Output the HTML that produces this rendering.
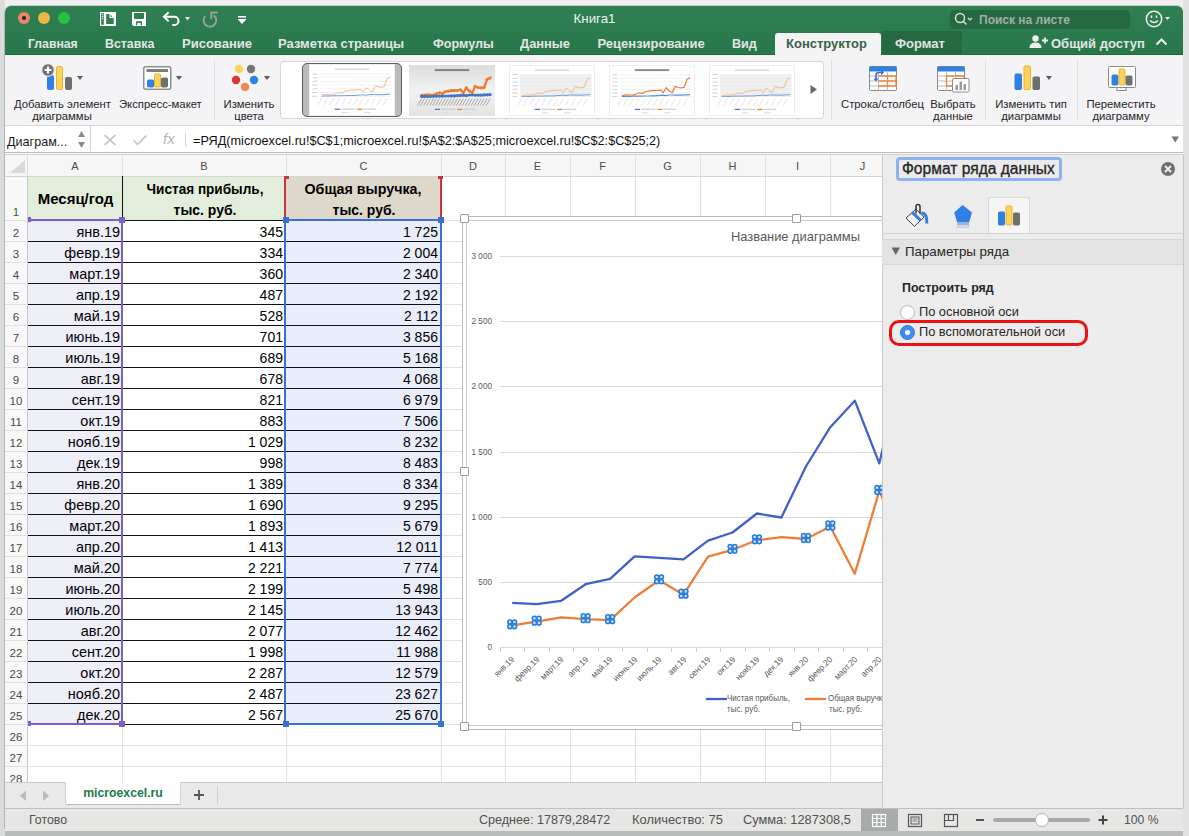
<!DOCTYPE html><html><head><meta charset="utf-8"><style>
html,body{margin:0;padding:0;width:1189px;height:836px;overflow:hidden;background:#efefef;font-family:"Liberation Sans",sans-serif;}
#win{position:absolute;left:0;top:0;width:1189px;height:836px;}
div{box-sizing:border-box;}
</style></head><body><div id="win">
<div style="position:absolute;left:0px;top:831px;width:1189px;height:5px;background:#b9bbbb;"></div>
<div style="position:absolute;left:1183px;top:0px;width:6px;height:836px;background:#e2e2e2;"></div>
<div style="position:absolute;left:0px;top:0px;width:5px;height:836px;background:#dadcdb;"></div>
<div style="position:absolute;left:4px;top:12px;width:1px;height:816px;background:#b2b5b3;"></div>
<div style="position:absolute;left:5px;top:5px;width:1178px;height:826px;background:#c9cbca;border-radius:6px 6px 5px 5px;"></div>
<div style="position:absolute;left:5px;top:6px;width:1178px;height:825px;background:#f3f3f3;border-radius:6px 6px 5px 5px;overflow:hidden;"></div>
<div style="position:absolute;left:5px;top:6px;width:1178px;height:49px;background:linear-gradient(#307f53 0px,#2f7e52 10px,#2b7a4e 30px,#29784c 48px);border-radius:6px 6px 0 0;"></div>
<div style="position:absolute;left:5px;top:54px;width:1178px;height:1px;background:#22693f;"></div>
<div style="position:absolute;left:18px;top:12px;width:12px;height:12px;background:#ec8664;border-radius:50%;"></div>
<div style="position:absolute;left:38px;top:12px;width:12px;height:12px;background:#e9b942;border-radius:50%;"></div>
<div style="position:absolute;left:58px;top:12px;width:12px;height:12px;background:#24c23f;border-radius:50%;"></div>
<div style="position:absolute;left:22px;top:16px;width:4px;height:4px;background:#222;border-radius:50%;"></div>
<svg style="position:absolute;left:99px;top:11px;" width="19" height="17" viewBox="0 0 19 17"><rect x="1" y="1" width="16" height="14" rx="0.8" fill="#fff"/><rect x="2.2" y="2" width="2.6" height="11.8" rx="0.5" fill="#2f7d51"/><circle cx="3.5" cy="3.4" r="0.6" fill="#fff"/><circle cx="3.5" cy="5.4" r="0.6" fill="#fff"/><circle cx="3.5" cy="7.4" r="0.6" fill="#fff"/><path d="M7.2 2.9 H10.5 V7 H14.7 V12.9 H7.2 Z" fill="#2f7d51"/><path d="M11.5 3.6 L13.6 5.7 H11.5 Z" fill="#2f7d51"/></svg>
<svg style="position:absolute;left:131px;top:11px;" width="16" height="16" viewBox="0 0 16 16"><path d="M1 1 H15 V15 H2.5 L1 13.5 Z" fill="#fff"/><path d="M3 2 H13 V7 Q13 8 12 8 H4 Q3 8 3 7 Z" fill="#2f7d51"/><path d="M5 14.2 V10.8 Q5 10.2 5.6 10.2 H10.4 Q11 10.2 11 10.8 V14.2 H9.7 V12 H6.3 V14.2 Z" fill="#2f7d51"/></svg>
<svg style="position:absolute;left:160px;top:10px;" width="34" height="18" viewBox="0 0 34 18"><path d="M3.5 6.8 H14.4 A4.1 4.1 0 0 1 14.4 15 H12.3" fill="none" stroke="#fff" stroke-width="2"/><path d="M8.6 2.3 L4 6.8 L8.6 11.4" fill="none" stroke="#fff" stroke-width="2"/><path d="M25 6.9 H30 L27.5 10.6 Z" fill="#eee"/></svg>
<svg style="position:absolute;left:200px;top:10px;" width="22" height="18" viewBox="0 0 22 18"><path d="M5.2 6.2 A6.3 6.3 0 1 0 13.6 5.2" fill="none" stroke="#9da39f" stroke-width="1.8"/><path d="M11.2 2.7 V9.2 M10.3 2.7 H17.7" fill="none" stroke="#9da39f" stroke-width="1.8"/></svg>
<svg style="position:absolute;left:236px;top:14px;" width="12" height="12" viewBox="0 0 12 12"><rect x="2" y="2" width="8" height="1.6" fill="#fff"/><path d="M1.5 5 H10.5 L6 10 Z" fill="#fff"/></svg>
<div style="position:absolute;left:594.5px;top:12px;font-size:13.3px;line-height:13.3px;color:#eef2ef;font-weight:400;white-space:nowrap;transform:translateX(-50%) scaleX(1.0);">Книга1</div>
<div style="position:absolute;left:950px;top:10px;width:180px;height:19px;background:#24693f;border-radius:5px;"></div>
<svg style="position:absolute;left:953px;top:11px;" width="22" height="16" viewBox="0 0 22 16"><circle cx="7" cy="7" r="4.5" fill="none" stroke="#ddd" stroke-width="1.5"/><line x1="10" y1="10" x2="13.5" y2="13.5" stroke="#ddd" stroke-width="1.6"/><path d="M15 7 L17 9 L19 7" fill="none" stroke="#ddd" stroke-width="1.2"/></svg>
<div style="position:absolute;left:979px;top:14px;font-size:12px;line-height:12px;color:#a2aea6;font-weight:700;white-space:nowrap;">Поиск на листе</div>
<svg style="position:absolute;left:1144px;top:9px;" width="30" height="20" viewBox="0 0 30 20"><circle cx="10" cy="10" r="7.7" fill="none" stroke="#f0f0f0" stroke-width="1.5"/><line x1="7.5" y1="6.5" x2="7.5" y2="9" stroke="#f0f0f0" stroke-width="1.5"/><line x1="12.5" y1="6.5" x2="12.5" y2="9" stroke="#f0f0f0" stroke-width="1.5"/><path d="M6 11.5 Q10 15.5 14 11.5" fill="none" stroke="#f0f0f0" stroke-width="1.5"/><path d="M21 8 H26 L23.5 11 Z" fill="#f0f0f0"/></svg>
<div style="position:absolute;left:27.5px;top:37px;font-size:13px;line-height:13px;color:#e3e5e3;font-weight:700;white-space:nowrap;transform:scaleX(0.94);transform-origin:left;">Главная</div>
<div style="position:absolute;left:105px;top:37px;font-size:13px;line-height:13px;color:#e3e5e3;font-weight:700;white-space:nowrap;transform:scaleX(0.95);transform-origin:left;">Вставка</div>
<div style="position:absolute;left:182px;top:37px;font-size:13px;line-height:13px;color:#e3e5e3;font-weight:700;white-space:nowrap;">Рисование</div>
<div style="position:absolute;left:278px;top:37px;font-size:13px;line-height:13px;color:#e3e5e3;font-weight:700;white-space:nowrap;">Разметка страницы</div>
<div style="position:absolute;left:432.5px;top:37px;font-size:13px;line-height:13px;color:#e3e5e3;font-weight:700;white-space:nowrap;transform:scaleX(0.97);transform-origin:left;">Формулы</div>
<div style="position:absolute;left:520px;top:37px;font-size:13px;line-height:13px;color:#e3e5e3;font-weight:700;white-space:nowrap;transform:scaleX(0.99);transform-origin:left;">Данные</div>
<div style="position:absolute;left:597.5px;top:37px;font-size:13px;line-height:13px;color:#e3e5e3;font-weight:700;white-space:nowrap;">Рецензирование</div>
<div style="position:absolute;left:732px;top:37px;font-size:13px;line-height:13px;color:#e3e5e3;font-weight:700;white-space:nowrap;transform:scaleX(0.97);transform-origin:left;">Вид</div>
<div style="position:absolute;left:775px;top:33px;width:106px;height:22px;background:#f3f3f3;border-radius:3px 3px 0 0;"></div>
<div style="position:absolute;left:786px;top:37px;font-size:13px;line-height:13px;color:#3b5e49;font-weight:700;white-space:nowrap;">Конструктор</div>
<div style="position:absolute;left:882px;top:31px;width:80px;height:24px;background:#24693f;border-radius:3px 3px 0 0;"></div>
<div style="position:absolute;left:895px;top:37px;font-size:13px;line-height:13px;color:#e3e5e3;font-weight:700;white-space:nowrap;">Формат</div>
<svg style="position:absolute;left:1029px;top:34px;" width="20" height="16" viewBox="0 0 20 16"><circle cx="6.5" cy="4.5" r="3.2" fill="#eee"/><path d="M0.5 14 Q0.5 8.5 6.5 8.5 Q12.5 8.5 12.5 14 Z" fill="#eee"/><path d="M13 6.5 H19 M16 3.5 V9.5" stroke="#eee" stroke-width="1.8"/></svg>
<div style="position:absolute;left:1051px;top:37px;font-size:13px;line-height:13px;color:#e3e5e3;font-weight:700;white-space:nowrap;">Общий доступ</div>
<svg style="position:absolute;left:1155px;top:37px;" width="13" height="9" viewBox="0 0 13 9"><path d="M1.5 7.5 L6.5 2.5 L11.5 7.5" fill="none" stroke="#eee" stroke-width="2"/></svg>
<div style="position:absolute;left:5px;top:55px;width:1178px;height:71px;background:#f4f3f6;"></div>
<div style="position:absolute;left:5px;top:125px;width:1178px;height:1px;background:#d6d6d6;"></div>
<svg style="position:absolute;left:40px;top:62px;" width="34" height="30" viewBox="0 0 34 30"><rect x="7.5" y="13.5" width="6" height="14" rx="1" fill="#2f80e2" stroke="#2f80e2" stroke-width="1"/><rect x="16.5" y="4.5" width="6" height="23" rx="1" fill="#fcd35b" stroke="#eeb52e" stroke-width="1"/><rect x="25.5" y="15.5" width="6" height="12" rx="1" fill="#6c716e" stroke="#6c716e" stroke-width="1"/><circle cx="8" cy="8" r="6.3" fill="#6f706f" stroke="#fff" stroke-width="1"/><path d="M8 4.5 V11.5 M4.5 8 H11.5" stroke="#fff" stroke-width="2.2"/></svg>
<svg style="position:absolute;left:77px;top:76px;" width="6" height="5" viewBox="0 0 6 5"><path d="M0 0 H6 L3 4 Z" fill="#5a5a5a"/></svg>
<div style="position:absolute;left:14px;top:99px;font-size:11.3px;line-height:11.3px;color:#262626;font-weight:400;white-space:nowrap;">Добавить элемент</div>
<div style="position:absolute;left:62px;top:111px;font-size:11.3px;line-height:11.3px;color:#262626;font-weight:400;white-space:nowrap;transform:translateX(-50%) scaleX(1.0);">диаграммы</div>
<svg style="position:absolute;left:143px;top:66px;" width="29" height="25" viewBox="0 0 29 25"><rect x="0.75" y="0.75" width="27" height="22.5" rx="2" fill="#fff" stroke="#8f8f8f" stroke-width="1.5"/><rect x="3.5" y="3" width="21.5" height="3" fill="#7b807d"/><rect x="4.5" y="14" width="6" height="7" rx="1" fill="#2f80e2" stroke="#2f80e2" stroke-width="1"/><rect x="11.5" y="8" width="6" height="13" rx="1" fill="#fcd35b" stroke="#eeb52e" stroke-width="1"/><rect x="18.5" y="12" width="6" height="9" rx="1" fill="#6c716e" stroke="#6c716e" stroke-width="1"/></svg>
<svg style="position:absolute;left:176px;top:76px;" width="6" height="5" viewBox="0 0 6 5"><path d="M0 0 H6 L3 4 Z" fill="#5a5a5a"/></svg>
<div style="position:absolute;left:119px;top:99px;font-size:11.3px;line-height:11.3px;color:#262626;font-weight:400;white-space:nowrap;">Экспресс-макет</div>
<div style="position:absolute;left:214px;top:60px;width:1px;height:60px;background:#dedede;"></div>
<svg style="position:absolute;left:230px;top:63px;" width="30" height="30" viewBox="0 0 30 30"><circle cx="9" cy="6" r="4.2" fill="#fcd35b"/><circle cx="21" cy="6" r="4.2" fill="#707571"/><circle cx="6" cy="17" r="4.2" fill="#d4382f"/><circle cx="24" cy="17" r="4.2" fill="#2f80e2"/><circle cx="15" cy="24" r="4.2" fill="#f18a4b"/></svg>
<svg style="position:absolute;left:264px;top:76px;" width="6" height="5" viewBox="0 0 6 5"><path d="M0 0 H6 L3 4 Z" fill="#5a5a5a"/></svg>
<div style="position:absolute;left:249px;top:99px;font-size:11.3px;line-height:11.3px;color:#262626;font-weight:400;white-space:nowrap;transform:translateX(-50%) scaleX(1.0);">Изменить</div>
<div style="position:absolute;left:249px;top:111px;font-size:11.3px;line-height:11.3px;color:#262626;font-weight:400;white-space:nowrap;transform:translateX(-50%) scaleX(1.0);">цвета</div>
<div style="position:absolute;left:280px;top:61px;width:544px;height:58px;background:#fff;border:1px solid #d5d5d5;border-radius:4px;"></div>
<svg style="position:absolute;left:810px;top:85px;" width="8" height="10" viewBox="0 0 8 10"><path d="M0.5 0 L7 4.5 L0.5 9 Z" fill="#6a6a6a"/></svg>
<div style="position:absolute;left:831px;top:60px;width:1px;height:60px;background:#dedede;"></div>
<div style="position:absolute;left:985px;top:60px;width:1px;height:60px;background:#dedede;"></div>
<div style="position:absolute;left:1077px;top:60px;width:1px;height:60px;background:#dedede;"></div>
<svg style="position:absolute;left:869px;top:66px;" width="29" height="27" viewBox="0 0 29 27"><rect x="0.5" y="0.5" width="27" height="24" rx="1" fill="#fff" stroke="#8a8a8a" stroke-width="1"/><rect x="0.5" y="0.5" width="27" height="5" fill="#2f80e2"/><path d="M9.5 5 V24.5 M18.5 5 V24.5 M1 10 H27 M1 15 H27 M1 20 H27" stroke="#bdbdbd" stroke-width="1"/><path d="M9.5 10 H27 V20 H9.5 M18.5 10 V20 M9.5 15 H27" fill="none" stroke="#f0873d" stroke-width="1.4"/><path d="M7 14 V9 Q7 6.5 10 6.5 H13" fill="none" stroke="#2f6fd8" stroke-width="1.6"/><path d="M12 4.5 L14.5 6.5 L12 8.5" fill="#2f6fd8" stroke="#2f6fd8"/><path d="M4.5 12.5 L7 15.5 L9.5 12.5 Z" fill="#2f6fd8"/></svg>
<div style="position:absolute;left:841px;top:99px;font-size:11.3px;line-height:11.3px;color:#262626;font-weight:400;white-space:nowrap;">Строка/столбец</div>
<svg style="position:absolute;left:937px;top:66px;" width="29" height="27" viewBox="0 0 29 27"><rect x="0.5" y="0.5" width="27" height="24" rx="1" fill="#fff" stroke="#8a8a8a" stroke-width="1"/><rect x="0.5" y="0.5" width="27" height="5" fill="#2f80e2"/><path d="M9.5 5 V24.5 M18.5 5 V24.5 M1 10 H27 M1 15 H27 M1 20 H27" stroke="#bdbdbd" stroke-width="1"/><path d="M9.5 10 H27 V20 H9.5 Z" fill="none" stroke="#f0873d" stroke-width="1.4"/></svg>
<svg style="position:absolute;left:952px;top:78px;" width="18" height="15" viewBox="0 0 18 15"><rect x="0.5" y="0.5" width="16.5" height="13.5" rx="1.5" fill="#fff" stroke="#8a8a8a"/><rect x="3.5" y="7" width="2.5" height="5" fill="#9a9a9a"/><rect x="7.5" y="3.5" width="2.5" height="8.5" fill="#9a9a9a"/><rect x="11.5" y="6" width="2.5" height="6" fill="#9a9a9a"/></svg>
<div style="position:absolute;left:953px;top:99px;font-size:11.3px;line-height:11.3px;color:#262626;font-weight:400;white-space:nowrap;transform:translateX(-50%) scaleX(1.0);">Выбрать</div>
<div style="position:absolute;left:953px;top:111px;font-size:11.3px;line-height:11.3px;color:#262626;font-weight:400;white-space:nowrap;transform:translateX(-50%) scaleX(1.0);">данные</div>
<svg style="position:absolute;left:1014px;top:65px;" width="28" height="26" viewBox="0 0 28 26"><rect x="1" y="9" width="6.5" height="15.5" rx="1" fill="#2f80e2" stroke="#2f80e2" stroke-width="1"/><rect x="10" y="1" width="6.5" height="23.5" rx="1" fill="#fcd35b" stroke="#eeb52e" stroke-width="1"/><rect x="19" y="12" width="6.5" height="12.5" rx="1" fill="#6c716e" stroke="#6c716e" stroke-width="1"/></svg>
<svg style="position:absolute;left:1046px;top:76px;" width="6" height="5" viewBox="0 0 6 5"><path d="M0 0 H6 L3 4 Z" fill="#5a5a5a"/></svg>
<div style="position:absolute;left:1031px;top:99px;font-size:11.3px;line-height:11.3px;color:#262626;font-weight:400;white-space:nowrap;transform:translateX(-50%) scaleX(1.0);">Изменить тип</div>
<div style="position:absolute;left:1031px;top:111px;font-size:11.3px;line-height:11.3px;color:#262626;font-weight:400;white-space:nowrap;transform:translateX(-50%) scaleX(1.0);">диаграммы</div>
<svg style="position:absolute;left:1107px;top:65px;" width="30" height="27" viewBox="0 0 30 27"><rect x="1.5" y="1.5" width="27" height="21" rx="1" fill="#fff" stroke="#8a8a8a" stroke-width="1"/><rect x="10" y="22.5" width="9" height="3" fill="#fff" stroke="#8a8a8a" stroke-width="1"/><rect x="5" y="10" width="6" height="10" rx="1" fill="#2f80e2" stroke="#2f80e2" stroke-width="1"/><rect x="12" y="4" width="6" height="16" rx="1" fill="#fcd35b" stroke="#eeb52e" stroke-width="1"/><rect x="19" y="11" width="6" height="9" rx="1" fill="#6c716e" stroke="#6c716e" stroke-width="1"/></svg>
<div style="position:absolute;left:1121px;top:99px;font-size:11.3px;line-height:11.3px;color:#262626;font-weight:400;white-space:nowrap;transform:translateX(-50%) scaleX(1.0);">Переместить</div>
<div style="position:absolute;left:1121px;top:111px;font-size:11.3px;line-height:11.3px;color:#262626;font-weight:400;white-space:nowrap;transform:translateX(-50%) scaleX(1.0);">диаграмму</div>
<div style="position:absolute;left:302px;top:63px;width:100px;height:54px;background:#b9bab9;border:1.5px solid #55655b;border-radius:5px;"></div>
<svg style="position:absolute;left:309px;top:64px;" width="86" height="52" viewBox="0 0 86 52"><rect x="0.5" y="0.5" width="85" height="51" fill="#fff" stroke="#eeeeee"/><rect x="25.8" y="4.16" width="34.4" height="2" fill="#999" opacity="0.3"/><line x1="11.18" y1="9.9" x2="82.56" y2="9.9" stroke="#e6e6e6" stroke-width="0.6"/><rect x="3.44" y="9.4" width="5.16" height="1" fill="#d2d2d2"/><line x1="11.18" y1="13.6" x2="82.56" y2="13.6" stroke="#e6e6e6" stroke-width="0.6"/><rect x="3.44" y="13.1" width="5.16" height="1" fill="#d2d2d2"/><line x1="11.18" y1="17.3" x2="82.56" y2="17.3" stroke="#e6e6e6" stroke-width="0.6"/><rect x="3.44" y="16.8" width="5.16" height="1" fill="#d2d2d2"/><line x1="11.18" y1="21.1" x2="82.56" y2="21.1" stroke="#e6e6e6" stroke-width="0.6"/><rect x="3.44" y="20.6" width="5.16" height="1" fill="#d2d2d2"/><line x1="11.18" y1="24.8" x2="82.56" y2="24.8" stroke="#e6e6e6" stroke-width="0.6"/><rect x="3.44" y="24.3" width="5.16" height="1" fill="#d2d2d2"/><line x1="11.18" y1="28.5" x2="82.56" y2="28.5" stroke="#e6e6e6" stroke-width="0.6"/><rect x="3.44" y="28.0" width="5.16" height="1" fill="#d2d2d2"/><line x1="11.18" y1="32.2" x2="82.56" y2="32.2" stroke="#e6e6e6" stroke-width="0.6"/><rect x="3.44" y="31.7" width="5.16" height="1" fill="#d2d2d2"/><polyline points="12.7,32.0 15.6,32.0 18.6,32.0 21.6,31.9 24.6,31.8 27.5,31.7 30.5,31.7 33.5,31.7 36.5,31.6 39.4,31.6 42.4,31.5 45.4,31.5 48.4,31.2 51.3,31.0 54.3,30.8 57.3,31.2 60.3,30.6 63.2,30.6 66.2,30.6 69.2,30.7 72.2,30.8 75.1,30.5 78.1,30.4 81.1,30.3" fill="none" stroke="#5b8fdc" stroke-width="0.9"/><polyline points="12.7,31.0 15.6,30.7 18.6,30.5 21.6,30.6 24.6,30.7 27.5,29.4 30.5,28.4 33.5,29.2 36.5,27.0 39.4,26.6 42.4,26.1 45.4,25.9 48.4,26.0 51.3,25.3 54.3,28.0 57.3,23.3 60.3,26.4 63.2,28.1 66.2,21.8 69.2,23.0 72.2,23.3 75.1,22.9 78.1,14.6 81.1,13.1" fill="none" stroke="#f4b183" stroke-width="0.9"/><line x1="12.7" y1="34.2" x2="8.7" y2="41.2" stroke="#d0d0d0" stroke-width="0.8" opacity="0.7"/><line x1="18.6" y1="34.2" x2="14.6" y2="41.2" stroke="#d0d0d0" stroke-width="0.8" opacity="0.7"/><line x1="24.6" y1="34.2" x2="20.6" y2="41.2" stroke="#d0d0d0" stroke-width="0.8" opacity="0.7"/><line x1="30.5" y1="34.2" x2="26.5" y2="41.2" stroke="#d0d0d0" stroke-width="0.8" opacity="0.7"/><line x1="36.5" y1="34.2" x2="32.5" y2="41.2" stroke="#d0d0d0" stroke-width="0.8" opacity="0.7"/><line x1="42.4" y1="34.2" x2="38.4" y2="41.2" stroke="#d0d0d0" stroke-width="0.8" opacity="0.7"/><line x1="48.4" y1="34.2" x2="44.4" y2="41.2" stroke="#d0d0d0" stroke-width="0.8" opacity="0.7"/><line x1="54.3" y1="34.2" x2="50.3" y2="41.2" stroke="#d0d0d0" stroke-width="0.8" opacity="0.7"/><line x1="60.3" y1="34.2" x2="56.3" y2="41.2" stroke="#d0d0d0" stroke-width="0.8" opacity="0.7"/><line x1="66.2" y1="34.2" x2="62.2" y2="41.2" stroke="#d0d0d0" stroke-width="0.8" opacity="0.7"/><line x1="72.2" y1="34.2" x2="68.2" y2="41.2" stroke="#d0d0d0" stroke-width="0.8" opacity="0.7"/><line x1="78.1" y1="34.2" x2="74.1" y2="41.2" stroke="#d0d0d0" stroke-width="0.8" opacity="0.7"/><line x1="25.8" y1="45.24" x2="30.959999999999997" y2="45.24" stroke="#4472c4" stroke-width="1.2"/><rect x="31.82" y="44.54" width="14.620000000000001" height="1.2" fill="#cfcfcf"/><line x1="48.160000000000004" y1="45.24" x2="53.32" y2="45.24" stroke="#ed7d31" stroke-width="1.2"/><rect x="54.18" y="44.54" width="12.9" height="1.2" fill="#cfcfcf"/><rect x="32.68" y="48.24" width="6.88" height="1" fill="#d8d8d8"/><rect x="55.04" y="48.24" width="6.88" height="1" fill="#d8d8d8"/></svg>
<svg style="position:absolute;left:409px;top:65px;" width="86" height="51" viewBox="0 0 86 51"><defs><linearGradient id="tg" x1="0" y1="0" x2="0" y2="1"><stop offset="0" stop-color="#dcdcdc"/><stop offset="0.5" stop-color="#f2f2f2"/><stop offset="1" stop-color="#e4e4e4"/></linearGradient></defs><rect x="0" y="0" width="86" height="51" fill="url(#tg)"/><rect x="25.8" y="4.08" width="34.4" height="2" fill="#444" opacity="0.6"/><polyline points="12.7,31.4 15.6,31.4 18.6,31.4 21.6,31.3 24.6,31.2 27.5,31.1 30.5,31.1 33.5,31.1 36.5,31.0 39.4,31.0 42.4,30.9 45.4,30.9 48.4,30.6 51.3,30.4 54.3,30.2 57.3,30.6 60.3,30.0 63.2,30.0 66.2,30.1 69.2,30.1 72.2,30.2 75.1,29.9 78.1,29.8 81.1,29.7" fill="none" stroke="#5b8fdc" stroke-width="2.2"/><polyline points="12.7,30.4 15.6,30.2 18.6,29.9 21.6,30.0 24.6,30.1 27.5,28.8 30.5,27.8 33.5,28.6 36.5,26.5 39.4,26.1 42.4,25.6 45.4,25.4 48.4,25.5 51.3,24.8 54.3,27.5 57.3,22.8 60.3,25.9 63.2,27.6 66.2,21.4 69.2,22.5 72.2,22.9 75.1,22.4 78.1,14.3 81.1,12.9" fill="none" stroke="#ed7d31" stroke-width="2.2"/><circle cx="12.7" cy="30.4" r="1.6" fill="#ed7d31"/><circle cx="12.7" cy="31.4" r="1.6" fill="#4472c4"/><circle cx="15.6" cy="30.2" r="1.6" fill="#ed7d31"/><circle cx="15.6" cy="31.4" r="1.6" fill="#4472c4"/><circle cx="18.6" cy="29.9" r="1.6" fill="#ed7d31"/><circle cx="18.6" cy="31.4" r="1.6" fill="#4472c4"/><circle cx="21.6" cy="30.0" r="1.6" fill="#ed7d31"/><circle cx="21.6" cy="31.3" r="1.6" fill="#4472c4"/><circle cx="24.6" cy="30.1" r="1.6" fill="#ed7d31"/><circle cx="24.6" cy="31.2" r="1.6" fill="#4472c4"/><circle cx="27.5" cy="28.8" r="1.6" fill="#ed7d31"/><circle cx="27.5" cy="31.1" r="1.6" fill="#4472c4"/><circle cx="30.5" cy="27.8" r="1.6" fill="#ed7d31"/><circle cx="30.5" cy="31.1" r="1.6" fill="#4472c4"/><circle cx="33.5" cy="28.6" r="1.6" fill="#ed7d31"/><circle cx="33.5" cy="31.1" r="1.6" fill="#4472c4"/><circle cx="36.5" cy="26.5" r="1.6" fill="#ed7d31"/><circle cx="36.5" cy="31.0" r="1.6" fill="#4472c4"/><circle cx="39.4" cy="26.1" r="1.6" fill="#ed7d31"/><circle cx="39.4" cy="31.0" r="1.6" fill="#4472c4"/><circle cx="42.4" cy="25.6" r="1.6" fill="#ed7d31"/><circle cx="42.4" cy="30.9" r="1.6" fill="#4472c4"/><circle cx="45.4" cy="25.4" r="1.6" fill="#ed7d31"/><circle cx="45.4" cy="30.9" r="1.6" fill="#4472c4"/><circle cx="48.4" cy="25.5" r="1.6" fill="#ed7d31"/><circle cx="48.4" cy="30.6" r="1.6" fill="#4472c4"/><circle cx="51.3" cy="24.8" r="1.6" fill="#ed7d31"/><circle cx="51.3" cy="30.4" r="1.6" fill="#4472c4"/><circle cx="54.3" cy="27.5" r="1.6" fill="#ed7d31"/><circle cx="54.3" cy="30.2" r="1.6" fill="#4472c4"/><circle cx="57.3" cy="22.8" r="1.6" fill="#ed7d31"/><circle cx="57.3" cy="30.6" r="1.6" fill="#4472c4"/><circle cx="60.3" cy="25.9" r="1.6" fill="#ed7d31"/><circle cx="60.3" cy="30.0" r="1.6" fill="#4472c4"/><circle cx="63.2" cy="27.6" r="1.6" fill="#ed7d31"/><circle cx="63.2" cy="30.0" r="1.6" fill="#4472c4"/><circle cx="66.2" cy="21.4" r="1.6" fill="#ed7d31"/><circle cx="66.2" cy="30.1" r="1.6" fill="#4472c4"/><circle cx="69.2" cy="22.5" r="1.6" fill="#ed7d31"/><circle cx="69.2" cy="30.1" r="1.6" fill="#4472c4"/><circle cx="72.2" cy="22.9" r="1.6" fill="#ed7d31"/><circle cx="72.2" cy="30.2" r="1.6" fill="#4472c4"/><circle cx="75.1" cy="22.4" r="1.6" fill="#ed7d31"/><circle cx="75.1" cy="29.9" r="1.6" fill="#4472c4"/><circle cx="78.1" cy="14.3" r="1.6" fill="#ed7d31"/><circle cx="78.1" cy="29.8" r="1.6" fill="#4472c4"/><circle cx="81.1" cy="12.9" r="1.6" fill="#ed7d31"/><circle cx="81.1" cy="29.7" r="1.6" fill="#4472c4"/><line x1="12.7" y1="33.6" x2="8.7" y2="40.6" stroke="#777" stroke-width="0.8" opacity="0.7"/><line x1="15.6" y1="33.6" x2="11.6" y2="40.6" stroke="#777" stroke-width="0.8" opacity="0.7"/><line x1="18.6" y1="33.6" x2="14.6" y2="40.6" stroke="#777" stroke-width="0.8" opacity="0.7"/><line x1="21.6" y1="33.6" x2="17.6" y2="40.6" stroke="#777" stroke-width="0.8" opacity="0.7"/><line x1="24.6" y1="33.6" x2="20.6" y2="40.6" stroke="#777" stroke-width="0.8" opacity="0.7"/><line x1="27.5" y1="33.6" x2="23.5" y2="40.6" stroke="#777" stroke-width="0.8" opacity="0.7"/><line x1="30.5" y1="33.6" x2="26.5" y2="40.6" stroke="#777" stroke-width="0.8" opacity="0.7"/><line x1="33.5" y1="33.6" x2="29.5" y2="40.6" stroke="#777" stroke-width="0.8" opacity="0.7"/><line x1="36.5" y1="33.6" x2="32.5" y2="40.6" stroke="#777" stroke-width="0.8" opacity="0.7"/><line x1="39.4" y1="33.6" x2="35.4" y2="40.6" stroke="#777" stroke-width="0.8" opacity="0.7"/><line x1="42.4" y1="33.6" x2="38.4" y2="40.6" stroke="#777" stroke-width="0.8" opacity="0.7"/><line x1="45.4" y1="33.6" x2="41.4" y2="40.6" stroke="#777" stroke-width="0.8" opacity="0.7"/><line x1="48.4" y1="33.6" x2="44.4" y2="40.6" stroke="#777" stroke-width="0.8" opacity="0.7"/><line x1="51.3" y1="33.6" x2="47.3" y2="40.6" stroke="#777" stroke-width="0.8" opacity="0.7"/><line x1="54.3" y1="33.6" x2="50.3" y2="40.6" stroke="#777" stroke-width="0.8" opacity="0.7"/><line x1="57.3" y1="33.6" x2="53.3" y2="40.6" stroke="#777" stroke-width="0.8" opacity="0.7"/><line x1="60.3" y1="33.6" x2="56.3" y2="40.6" stroke="#777" stroke-width="0.8" opacity="0.7"/><line x1="63.2" y1="33.6" x2="59.2" y2="40.6" stroke="#777" stroke-width="0.8" opacity="0.7"/><line x1="66.2" y1="33.6" x2="62.2" y2="40.6" stroke="#777" stroke-width="0.8" opacity="0.7"/><line x1="69.2" y1="33.6" x2="65.2" y2="40.6" stroke="#777" stroke-width="0.8" opacity="0.7"/><line x1="72.2" y1="33.6" x2="68.2" y2="40.6" stroke="#777" stroke-width="0.8" opacity="0.7"/><line x1="75.1" y1="33.6" x2="71.1" y2="40.6" stroke="#777" stroke-width="0.8" opacity="0.7"/><line x1="78.1" y1="33.6" x2="74.1" y2="40.6" stroke="#777" stroke-width="0.8" opacity="0.7"/><line x1="81.1" y1="33.6" x2="77.1" y2="40.6" stroke="#777" stroke-width="0.8" opacity="0.7"/><line x1="25.8" y1="44.37" x2="30.959999999999997" y2="44.37" stroke="#4472c4" stroke-width="1.2"/><rect x="31.82" y="43.669999999999995" width="14.620000000000001" height="1.2" fill="#cfcfcf"/><line x1="48.160000000000004" y1="44.37" x2="53.32" y2="44.37" stroke="#ed7d31" stroke-width="1.2"/><rect x="54.18" y="43.669999999999995" width="12.9" height="1.2" fill="#cfcfcf"/><rect x="32.68" y="47.37" width="6.88" height="1" fill="#d8d8d8"/><rect x="55.04" y="47.37" width="6.88" height="1" fill="#d8d8d8"/></svg>
<svg style="position:absolute;left:509px;top:65px;" width="86" height="51" viewBox="0 0 86 51"><rect x="0.5" y="0.5" width="85" height="50" fill="#fff" stroke="#eeeeee"/><rect x="25.8" y="4.08" width="34.4" height="2" fill="#999" opacity="0.3"/><rect x="11.18" y="9.69" width="71.38" height="21.93" fill="#f0f0f0"/><line x1="11.18" y1="9.7" x2="82.56" y2="9.7" stroke="#e6e6e6" stroke-width="0.6"/><rect x="3.44" y="9.2" width="5.16" height="1" fill="#d2d2d2"/><line x1="11.18" y1="13.3" x2="82.56" y2="13.3" stroke="#e6e6e6" stroke-width="0.6"/><rect x="3.44" y="12.8" width="5.16" height="1" fill="#d2d2d2"/><line x1="11.18" y1="17.0" x2="82.56" y2="17.0" stroke="#e6e6e6" stroke-width="0.6"/><rect x="3.44" y="16.5" width="5.16" height="1" fill="#d2d2d2"/><line x1="11.18" y1="20.7" x2="82.56" y2="20.7" stroke="#e6e6e6" stroke-width="0.6"/><rect x="3.44" y="20.2" width="5.16" height="1" fill="#d2d2d2"/><line x1="11.18" y1="24.3" x2="82.56" y2="24.3" stroke="#e6e6e6" stroke-width="0.6"/><rect x="3.44" y="23.8" width="5.16" height="1" fill="#d2d2d2"/><line x1="11.18" y1="28.0" x2="82.56" y2="28.0" stroke="#e6e6e6" stroke-width="0.6"/><rect x="3.44" y="27.5" width="5.16" height="1" fill="#d2d2d2"/><line x1="11.18" y1="31.6" x2="82.56" y2="31.6" stroke="#e6e6e6" stroke-width="0.6"/><rect x="3.44" y="31.1" width="5.16" height="1" fill="#d2d2d2"/><polyline points="12.7,31.4 15.6,31.4 18.6,31.4 21.6,31.3 24.6,31.2 27.5,31.1 30.5,31.1 33.5,31.1 36.5,31.0 39.4,31.0 42.4,30.9 45.4,30.9 48.4,30.6 51.3,30.4 54.3,30.2 57.3,30.6 60.3,30.0 63.2,30.0 66.2,30.1 69.2,30.1 72.2,30.2 75.1,29.9 78.1,29.8 81.1,29.7" fill="none" stroke="#5b8fdc" stroke-width="0.9"/><polyline points="12.7,30.4 15.6,30.2 18.6,29.9 21.6,30.0 24.6,30.1 27.5,28.8 30.5,27.8 33.5,28.6 36.5,26.5 39.4,26.1 42.4,25.6 45.4,25.4 48.4,25.5 51.3,24.8 54.3,27.5 57.3,22.8 60.3,25.9 63.2,27.6 66.2,21.4 69.2,22.5 72.2,22.9 75.1,22.4 78.1,14.3 81.1,12.9" fill="none" stroke="#f4b183" stroke-width="0.9"/><line x1="12.7" y1="33.6" x2="8.7" y2="40.6" stroke="#d0d0d0" stroke-width="0.8" opacity="0.7"/><line x1="18.6" y1="33.6" x2="14.6" y2="40.6" stroke="#d0d0d0" stroke-width="0.8" opacity="0.7"/><line x1="24.6" y1="33.6" x2="20.6" y2="40.6" stroke="#d0d0d0" stroke-width="0.8" opacity="0.7"/><line x1="30.5" y1="33.6" x2="26.5" y2="40.6" stroke="#d0d0d0" stroke-width="0.8" opacity="0.7"/><line x1="36.5" y1="33.6" x2="32.5" y2="40.6" stroke="#d0d0d0" stroke-width="0.8" opacity="0.7"/><line x1="42.4" y1="33.6" x2="38.4" y2="40.6" stroke="#d0d0d0" stroke-width="0.8" opacity="0.7"/><line x1="48.4" y1="33.6" x2="44.4" y2="40.6" stroke="#d0d0d0" stroke-width="0.8" opacity="0.7"/><line x1="54.3" y1="33.6" x2="50.3" y2="40.6" stroke="#d0d0d0" stroke-width="0.8" opacity="0.7"/><line x1="60.3" y1="33.6" x2="56.3" y2="40.6" stroke="#d0d0d0" stroke-width="0.8" opacity="0.7"/><line x1="66.2" y1="33.6" x2="62.2" y2="40.6" stroke="#d0d0d0" stroke-width="0.8" opacity="0.7"/><line x1="72.2" y1="33.6" x2="68.2" y2="40.6" stroke="#d0d0d0" stroke-width="0.8" opacity="0.7"/><line x1="78.1" y1="33.6" x2="74.1" y2="40.6" stroke="#d0d0d0" stroke-width="0.8" opacity="0.7"/><line x1="25.8" y1="44.37" x2="30.959999999999997" y2="44.37" stroke="#4472c4" stroke-width="1.2"/><rect x="31.82" y="43.669999999999995" width="14.620000000000001" height="1.2" fill="#cfcfcf"/><line x1="48.160000000000004" y1="44.37" x2="53.32" y2="44.37" stroke="#ed7d31" stroke-width="1.2"/><rect x="54.18" y="43.669999999999995" width="12.9" height="1.2" fill="#cfcfcf"/><rect x="32.68" y="47.37" width="6.88" height="1" fill="#d8d8d8"/><rect x="55.04" y="47.37" width="6.88" height="1" fill="#d8d8d8"/></svg>
<svg style="position:absolute;left:609px;top:65px;" width="86" height="51" viewBox="0 0 86 51"><rect x="0.5" y="0.5" width="85" height="50" fill="#fff" stroke="#eeeeee"/><rect x="25.8" y="4.08" width="34.4" height="2" fill="#444" opacity="0.6"/><line x1="11.18" y1="9.7" x2="82.56" y2="9.7" stroke="#e6e6e6" stroke-width="0.6"/><rect x="3.44" y="9.2" width="5.16" height="1" fill="#d2d2d2"/><line x1="11.18" y1="13.3" x2="82.56" y2="13.3" stroke="#e6e6e6" stroke-width="0.6"/><rect x="3.44" y="12.8" width="5.16" height="1" fill="#d2d2d2"/><line x1="11.18" y1="17.0" x2="82.56" y2="17.0" stroke="#e6e6e6" stroke-width="0.6"/><rect x="3.44" y="16.5" width="5.16" height="1" fill="#d2d2d2"/><line x1="11.18" y1="20.7" x2="82.56" y2="20.7" stroke="#e6e6e6" stroke-width="0.6"/><rect x="3.44" y="20.2" width="5.16" height="1" fill="#d2d2d2"/><line x1="11.18" y1="24.3" x2="82.56" y2="24.3" stroke="#e6e6e6" stroke-width="0.6"/><rect x="3.44" y="23.8" width="5.16" height="1" fill="#d2d2d2"/><line x1="11.18" y1="28.0" x2="82.56" y2="28.0" stroke="#e6e6e6" stroke-width="0.6"/><rect x="3.44" y="27.5" width="5.16" height="1" fill="#d2d2d2"/><line x1="11.18" y1="31.6" x2="82.56" y2="31.6" stroke="#e6e6e6" stroke-width="0.6"/><rect x="3.44" y="31.1" width="5.16" height="1" fill="#d2d2d2"/><polyline points="12.7,31.4 15.6,31.4 18.6,31.4 21.6,31.3 24.6,31.2 27.5,31.1 30.5,31.1 33.5,31.1 36.5,31.0 39.4,31.0 42.4,30.9 45.4,30.9 48.4,30.6 51.3,30.4 54.3,30.2 57.3,30.6 60.3,30.0 63.2,30.0 66.2,30.1 69.2,30.1 72.2,30.2 75.1,29.9 78.1,29.8 81.1,29.7" fill="none" stroke="#5b8fdc" stroke-width="1.2"/><polyline points="12.7,30.4 15.6,30.2 18.6,29.9 21.6,30.0 24.6,30.1 27.5,28.8 30.5,27.8 33.5,28.6 36.5,26.5 39.4,26.1 42.4,25.6 45.4,25.4 48.4,25.5 51.3,24.8 54.3,27.5 57.3,22.8 60.3,25.9 63.2,27.6 66.2,21.4 69.2,22.5 72.2,22.9 75.1,22.4 78.1,14.3 81.1,12.9" fill="none" stroke="#ed7d31" stroke-width="1.2"/><line x1="12.7" y1="33.6" x2="8.7" y2="40.6" stroke="#d0d0d0" stroke-width="0.8" opacity="0.7"/><line x1="18.6" y1="33.6" x2="14.6" y2="40.6" stroke="#d0d0d0" stroke-width="0.8" opacity="0.7"/><line x1="24.6" y1="33.6" x2="20.6" y2="40.6" stroke="#d0d0d0" stroke-width="0.8" opacity="0.7"/><line x1="30.5" y1="33.6" x2="26.5" y2="40.6" stroke="#d0d0d0" stroke-width="0.8" opacity="0.7"/><line x1="36.5" y1="33.6" x2="32.5" y2="40.6" stroke="#d0d0d0" stroke-width="0.8" opacity="0.7"/><line x1="42.4" y1="33.6" x2="38.4" y2="40.6" stroke="#d0d0d0" stroke-width="0.8" opacity="0.7"/><line x1="48.4" y1="33.6" x2="44.4" y2="40.6" stroke="#d0d0d0" stroke-width="0.8" opacity="0.7"/><line x1="54.3" y1="33.6" x2="50.3" y2="40.6" stroke="#d0d0d0" stroke-width="0.8" opacity="0.7"/><line x1="60.3" y1="33.6" x2="56.3" y2="40.6" stroke="#d0d0d0" stroke-width="0.8" opacity="0.7"/><line x1="66.2" y1="33.6" x2="62.2" y2="40.6" stroke="#d0d0d0" stroke-width="0.8" opacity="0.7"/><line x1="72.2" y1="33.6" x2="68.2" y2="40.6" stroke="#d0d0d0" stroke-width="0.8" opacity="0.7"/><line x1="78.1" y1="33.6" x2="74.1" y2="40.6" stroke="#d0d0d0" stroke-width="0.8" opacity="0.7"/><line x1="25.8" y1="44.37" x2="30.959999999999997" y2="44.37" stroke="#4472c4" stroke-width="1.2"/><rect x="31.82" y="43.669999999999995" width="14.620000000000001" height="1.2" fill="#cfcfcf"/><line x1="48.160000000000004" y1="44.37" x2="53.32" y2="44.37" stroke="#ed7d31" stroke-width="1.2"/><rect x="54.18" y="43.669999999999995" width="12.9" height="1.2" fill="#cfcfcf"/><rect x="32.68" y="47.37" width="6.88" height="1" fill="#d8d8d8"/><rect x="55.04" y="47.37" width="6.88" height="1" fill="#d8d8d8"/></svg>
<svg style="position:absolute;left:709px;top:65px;" width="86" height="51" viewBox="0 0 86 51"><rect x="0.5" y="0.5" width="85" height="50" fill="#fff" stroke="#eeeeee"/><rect x="25.8" y="4.08" width="34.4" height="2" fill="#999" opacity="0.3"/><rect x="11.18" y="9.69" width="71.38" height="21.93" fill="#f0f0f0"/><line x1="11.18" y1="9.7" x2="82.56" y2="9.7" stroke="#e6e6e6" stroke-width="0.6"/><rect x="3.44" y="9.2" width="5.16" height="1" fill="#d2d2d2"/><line x1="11.18" y1="13.3" x2="82.56" y2="13.3" stroke="#e6e6e6" stroke-width="0.6"/><rect x="3.44" y="12.8" width="5.16" height="1" fill="#d2d2d2"/><line x1="11.18" y1="17.0" x2="82.56" y2="17.0" stroke="#e6e6e6" stroke-width="0.6"/><rect x="3.44" y="16.5" width="5.16" height="1" fill="#d2d2d2"/><line x1="11.18" y1="20.7" x2="82.56" y2="20.7" stroke="#e6e6e6" stroke-width="0.6"/><rect x="3.44" y="20.2" width="5.16" height="1" fill="#d2d2d2"/><line x1="11.18" y1="24.3" x2="82.56" y2="24.3" stroke="#e6e6e6" stroke-width="0.6"/><rect x="3.44" y="23.8" width="5.16" height="1" fill="#d2d2d2"/><line x1="11.18" y1="28.0" x2="82.56" y2="28.0" stroke="#e6e6e6" stroke-width="0.6"/><rect x="3.44" y="27.5" width="5.16" height="1" fill="#d2d2d2"/><line x1="11.18" y1="31.6" x2="82.56" y2="31.6" stroke="#e6e6e6" stroke-width="0.6"/><rect x="3.44" y="31.1" width="5.16" height="1" fill="#d2d2d2"/><polyline points="12.7,31.4 15.6,31.4 18.6,31.4 21.6,31.3 24.6,31.2 27.5,31.1 30.5,31.1 33.5,31.1 36.5,31.0 39.4,31.0 42.4,30.9 45.4,30.9 48.4,30.6 51.3,30.4 54.3,30.2 57.3,30.6 60.3,30.0 63.2,30.0 66.2,30.1 69.2,30.1 72.2,30.2 75.1,29.9 78.1,29.8 81.1,29.7" fill="none" stroke="#5b8fdc" stroke-width="0.9"/><polyline points="12.7,30.4 15.6,30.2 18.6,29.9 21.6,30.0 24.6,30.1 27.5,28.8 30.5,27.8 33.5,28.6 36.5,26.5 39.4,26.1 42.4,25.6 45.4,25.4 48.4,25.5 51.3,24.8 54.3,27.5 57.3,22.8 60.3,25.9 63.2,27.6 66.2,21.4 69.2,22.5 72.2,22.9 75.1,22.4 78.1,14.3 81.1,12.9" fill="none" stroke="#f4b183" stroke-width="0.9"/><line x1="12.7" y1="33.6" x2="8.7" y2="40.6" stroke="#d0d0d0" stroke-width="0.8" opacity="0.7"/><line x1="18.6" y1="33.6" x2="14.6" y2="40.6" stroke="#d0d0d0" stroke-width="0.8" opacity="0.7"/><line x1="24.6" y1="33.6" x2="20.6" y2="40.6" stroke="#d0d0d0" stroke-width="0.8" opacity="0.7"/><line x1="30.5" y1="33.6" x2="26.5" y2="40.6" stroke="#d0d0d0" stroke-width="0.8" opacity="0.7"/><line x1="36.5" y1="33.6" x2="32.5" y2="40.6" stroke="#d0d0d0" stroke-width="0.8" opacity="0.7"/><line x1="42.4" y1="33.6" x2="38.4" y2="40.6" stroke="#d0d0d0" stroke-width="0.8" opacity="0.7"/><line x1="48.4" y1="33.6" x2="44.4" y2="40.6" stroke="#d0d0d0" stroke-width="0.8" opacity="0.7"/><line x1="54.3" y1="33.6" x2="50.3" y2="40.6" stroke="#d0d0d0" stroke-width="0.8" opacity="0.7"/><line x1="60.3" y1="33.6" x2="56.3" y2="40.6" stroke="#d0d0d0" stroke-width="0.8" opacity="0.7"/><line x1="66.2" y1="33.6" x2="62.2" y2="40.6" stroke="#d0d0d0" stroke-width="0.8" opacity="0.7"/><line x1="72.2" y1="33.6" x2="68.2" y2="40.6" stroke="#d0d0d0" stroke-width="0.8" opacity="0.7"/><line x1="78.1" y1="33.6" x2="74.1" y2="40.6" stroke="#d0d0d0" stroke-width="0.8" opacity="0.7"/><line x1="25.8" y1="44.37" x2="30.959999999999997" y2="44.37" stroke="#4472c4" stroke-width="1.2"/><rect x="31.82" y="43.669999999999995" width="14.620000000000001" height="1.2" fill="#cfcfcf"/><line x1="48.160000000000004" y1="44.37" x2="53.32" y2="44.37" stroke="#ed7d31" stroke-width="1.2"/><rect x="54.18" y="43.669999999999995" width="12.9" height="1.2" fill="#cfcfcf"/><rect x="32.68" y="47.37" width="6.88" height="1" fill="#d8d8d8"/><rect x="55.04" y="47.37" width="6.88" height="1" fill="#d8d8d8"/></svg>
<div style="position:absolute;left:5px;top:126px;width:1178px;height:27px;background:#fff;"></div>
<div style="position:absolute;left:5px;top:152px;width:1178px;height:1px;background:#bcbcbc;"></div>
<div style="position:absolute;left:5px;top:153px;width:1178px;height:1px;background:#fafafa;"></div>
<div style="position:absolute;left:5px;top:154px;width:1178px;height:1px;background:#d0d0d0;"></div>
<div style="position:absolute;left:90px;top:126px;width:1px;height:25px;background:#d0d0d0;"></div>
<div style="position:absolute;left:7px;top:135px;font-size:13px;line-height:13px;color:#1a1a1a;font-weight:400;white-space:nowrap;transform:scaleX(0.968);transform-origin:left;">Диаграм...</div>
<svg style="position:absolute;left:77px;top:129px;" width="10" height="21" viewBox="0 0 10 21"><path d="M1 8 L4.5 2 L8 8 Z" fill="#8a8a8a"/><path d="M1 13 L4.5 19 L8 13 Z" fill="#8a8a8a"/></svg>
<svg style="position:absolute;left:103px;top:134px;" width="14" height="12" viewBox="0 0 14 12"><path d="M1.5 1 L12.5 11 M12.5 1 L1.5 11" stroke="#c9c9c9" stroke-width="1.8"/></svg>
<svg style="position:absolute;left:132px;top:134px;" width="16" height="12" viewBox="0 0 16 12"><path d="M1.5 6 L5.5 10.5 L14.5 1.5" fill="none" stroke="#c9c9c9" stroke-width="1.8"/></svg>
<div style="position:absolute;left:163px;top:131px;font-size:15px;line-height:15px;color:#b5b5b5;font-weight:400;white-space:nowrap;font-family:"Liberation Serif",serif;"><i>fx</i></div>
<div style="position:absolute;left:185px;top:132px;width:1px;height:15px;background:#dadada;"></div>
<div style="position:absolute;left:193px;top:134px;font-size:13px;line-height:13px;color:#111;font-weight:400;white-space:nowrap;transform:scaleX(0.975);transform-origin:left;">=РЯД(microexcel.ru!$C$1;microexcel.ru!$A$2:$A$25;microexcel.ru!$C$2:$C$25;2)</div>
<svg style="position:absolute;left:1171px;top:136px;" width="9" height="8" viewBox="0 0 9 8"><path d="M0.5 0.5 H8 L4.25 6.5 Z" fill="#777"/></svg>
<div style="position:absolute;left:5px;top:155px;width:877px;height:21px;background:#f6f6f6;"></div>
<div style="position:absolute;left:5px;top:176px;width:877px;height:1px;background:#d4d4d4;"></div>
<svg style="position:absolute;left:9px;top:159px;" width="18" height="15" viewBox="0 0 18 15"><path d="M16 1 V14 H1 Z" fill="#d9d9d9"/></svg>
<div style="position:absolute;left:27px;top:155px;width:1px;height:21px;background:#dcdcdc;"></div>
<div style="position:absolute;left:122px;top:155px;width:1px;height:21px;background:#e2e2e2;"></div>
<div style="position:absolute;left:75.0px;top:161px;font-size:11px;line-height:11px;color:#4b4b4b;font-weight:400;white-space:nowrap;transform:translateX(-50%) scaleX(1.0);">A</div>
<div style="position:absolute;left:286px;top:155px;width:1px;height:21px;background:#e2e2e2;"></div>
<div style="position:absolute;left:204.0px;top:161px;font-size:11px;line-height:11px;color:#4b4b4b;font-weight:400;white-space:nowrap;transform:translateX(-50%) scaleX(1.0);">B</div>
<div style="position:absolute;left:441px;top:155px;width:1px;height:21px;background:#e2e2e2;"></div>
<div style="position:absolute;left:363.5px;top:161px;font-size:11px;line-height:11px;color:#4b4b4b;font-weight:400;white-space:nowrap;transform:translateX(-50%) scaleX(1.0);">C</div>
<div style="position:absolute;left:505px;top:155px;width:1px;height:21px;background:#e2e2e2;"></div>
<div style="position:absolute;left:473.0px;top:161px;font-size:11px;line-height:11px;color:#4b4b4b;font-weight:400;white-space:nowrap;transform:translateX(-50%) scaleX(1.0);">D</div>
<div style="position:absolute;left:570px;top:155px;width:1px;height:21px;background:#e2e2e2;"></div>
<div style="position:absolute;left:537.5px;top:161px;font-size:11px;line-height:11px;color:#4b4b4b;font-weight:400;white-space:nowrap;transform:translateX(-50%) scaleX(1.0);">E</div>
<div style="position:absolute;left:635px;top:155px;width:1px;height:21px;background:#e2e2e2;"></div>
<div style="position:absolute;left:602.5px;top:161px;font-size:11px;line-height:11px;color:#4b4b4b;font-weight:400;white-space:nowrap;transform:translateX(-50%) scaleX(1.0);">F</div>
<div style="position:absolute;left:700px;top:155px;width:1px;height:21px;background:#e2e2e2;"></div>
<div style="position:absolute;left:667.5px;top:161px;font-size:11px;line-height:11px;color:#4b4b4b;font-weight:400;white-space:nowrap;transform:translateX(-50%) scaleX(1.0);">G</div>
<div style="position:absolute;left:765px;top:155px;width:1px;height:21px;background:#e2e2e2;"></div>
<div style="position:absolute;left:732.5px;top:161px;font-size:11px;line-height:11px;color:#4b4b4b;font-weight:400;white-space:nowrap;transform:translateX(-50%) scaleX(1.0);">H</div>
<div style="position:absolute;left:830px;top:155px;width:1px;height:21px;background:#e2e2e2;"></div>
<div style="position:absolute;left:797.5px;top:161px;font-size:11px;line-height:11px;color:#4b4b4b;font-weight:400;white-space:nowrap;transform:translateX(-50%) scaleX(1.0);">I</div>
<div style="position:absolute;left:895px;top:155px;width:1px;height:21px;background:#e2e2e2;"></div>
<div style="position:absolute;left:862.5px;top:161px;font-size:11px;line-height:11px;color:#4b4b4b;font-weight:400;white-space:nowrap;transform:translateX(-50%) scaleX(1.0);">J</div>
<div style="position:absolute;left:5px;top:177px;width:23px;height:605px;background:#f8f8f8;"></div>
<div style="position:absolute;left:27px;top:176px;width:1px;height:606px;background:#c6c6c6;"></div>
<div style="position:absolute;left:28px;top:177px;width:854px;height:605px;background:#fff;"></div>
<div style="position:absolute;left:5px;top:220px;width:877px;height:1px;background:#e0e0e0;"></div>
<div style="position:absolute;left:5px;top:241px;width:877px;height:1px;background:#e0e0e0;"></div>
<div style="position:absolute;left:5px;top:262px;width:877px;height:1px;background:#e0e0e0;"></div>
<div style="position:absolute;left:5px;top:283px;width:877px;height:1px;background:#e0e0e0;"></div>
<div style="position:absolute;left:5px;top:304px;width:877px;height:1px;background:#e0e0e0;"></div>
<div style="position:absolute;left:5px;top:325px;width:877px;height:1px;background:#e0e0e0;"></div>
<div style="position:absolute;left:5px;top:346px;width:877px;height:1px;background:#e0e0e0;"></div>
<div style="position:absolute;left:5px;top:367px;width:877px;height:1px;background:#e0e0e0;"></div>
<div style="position:absolute;left:5px;top:388px;width:877px;height:1px;background:#e0e0e0;"></div>
<div style="position:absolute;left:5px;top:409px;width:877px;height:1px;background:#e0e0e0;"></div>
<div style="position:absolute;left:5px;top:430px;width:877px;height:1px;background:#e0e0e0;"></div>
<div style="position:absolute;left:5px;top:451px;width:877px;height:1px;background:#e0e0e0;"></div>
<div style="position:absolute;left:5px;top:472px;width:877px;height:1px;background:#e0e0e0;"></div>
<div style="position:absolute;left:5px;top:493px;width:877px;height:1px;background:#e0e0e0;"></div>
<div style="position:absolute;left:5px;top:514px;width:877px;height:1px;background:#e0e0e0;"></div>
<div style="position:absolute;left:5px;top:535px;width:877px;height:1px;background:#e0e0e0;"></div>
<div style="position:absolute;left:5px;top:556px;width:877px;height:1px;background:#e0e0e0;"></div>
<div style="position:absolute;left:5px;top:577px;width:877px;height:1px;background:#e0e0e0;"></div>
<div style="position:absolute;left:5px;top:598px;width:877px;height:1px;background:#e0e0e0;"></div>
<div style="position:absolute;left:5px;top:619px;width:877px;height:1px;background:#e0e0e0;"></div>
<div style="position:absolute;left:5px;top:640px;width:877px;height:1px;background:#e0e0e0;"></div>
<div style="position:absolute;left:5px;top:661px;width:877px;height:1px;background:#e0e0e0;"></div>
<div style="position:absolute;left:5px;top:682px;width:877px;height:1px;background:#e0e0e0;"></div>
<div style="position:absolute;left:5px;top:703px;width:877px;height:1px;background:#e0e0e0;"></div>
<div style="position:absolute;left:5px;top:724px;width:877px;height:1px;background:#e0e0e0;"></div>
<div style="position:absolute;left:5px;top:745px;width:877px;height:1px;background:#e0e0e0;"></div>
<div style="position:absolute;left:5px;top:766px;width:877px;height:1px;background:#e0e0e0;"></div>
<div style="position:absolute;left:122px;top:177px;width:1px;height:605px;background:#e0e0e0;"></div>
<div style="position:absolute;left:286px;top:177px;width:1px;height:605px;background:#e0e0e0;"></div>
<div style="position:absolute;left:441px;top:177px;width:1px;height:605px;background:#e0e0e0;"></div>
<div style="position:absolute;left:505px;top:177px;width:1px;height:605px;background:#e0e0e0;"></div>
<div style="position:absolute;left:570px;top:177px;width:1px;height:605px;background:#e0e0e0;"></div>
<div style="position:absolute;left:635px;top:177px;width:1px;height:605px;background:#e0e0e0;"></div>
<div style="position:absolute;left:700px;top:177px;width:1px;height:605px;background:#e0e0e0;"></div>
<div style="position:absolute;left:765px;top:177px;width:1px;height:605px;background:#e0e0e0;"></div>
<div style="position:absolute;left:830px;top:177px;width:1px;height:605px;background:#e0e0e0;"></div>
<div style="position:absolute;left:895px;top:177px;width:1px;height:605px;background:#e0e0e0;"></div>
<div style="position:absolute;left:16px;top:207px;font-size:11.5px;line-height:11.5px;color:#4a4a4a;font-weight:400;white-space:nowrap;transform:translateX(-50%) scaleX(1.0);">1</div>
<div style="position:absolute;left:16px;top:228px;font-size:11.5px;line-height:11.5px;color:#4a4a4a;font-weight:400;white-space:nowrap;transform:translateX(-50%) scaleX(1.0);">2</div>
<div style="position:absolute;left:16px;top:249px;font-size:11.5px;line-height:11.5px;color:#4a4a4a;font-weight:400;white-space:nowrap;transform:translateX(-50%) scaleX(1.0);">3</div>
<div style="position:absolute;left:16px;top:270px;font-size:11.5px;line-height:11.5px;color:#4a4a4a;font-weight:400;white-space:nowrap;transform:translateX(-50%) scaleX(1.0);">4</div>
<div style="position:absolute;left:16px;top:291px;font-size:11.5px;line-height:11.5px;color:#4a4a4a;font-weight:400;white-space:nowrap;transform:translateX(-50%) scaleX(1.0);">5</div>
<div style="position:absolute;left:16px;top:312px;font-size:11.5px;line-height:11.5px;color:#4a4a4a;font-weight:400;white-space:nowrap;transform:translateX(-50%) scaleX(1.0);">6</div>
<div style="position:absolute;left:16px;top:333px;font-size:11.5px;line-height:11.5px;color:#4a4a4a;font-weight:400;white-space:nowrap;transform:translateX(-50%) scaleX(1.0);">7</div>
<div style="position:absolute;left:16px;top:354px;font-size:11.5px;line-height:11.5px;color:#4a4a4a;font-weight:400;white-space:nowrap;transform:translateX(-50%) scaleX(1.0);">8</div>
<div style="position:absolute;left:16px;top:375px;font-size:11.5px;line-height:11.5px;color:#4a4a4a;font-weight:400;white-space:nowrap;transform:translateX(-50%) scaleX(1.0);">9</div>
<div style="position:absolute;left:16px;top:396px;font-size:11.5px;line-height:11.5px;color:#4a4a4a;font-weight:400;white-space:nowrap;transform:translateX(-50%) scaleX(1.0);">10</div>
<div style="position:absolute;left:16px;top:417px;font-size:11.5px;line-height:11.5px;color:#4a4a4a;font-weight:400;white-space:nowrap;transform:translateX(-50%) scaleX(1.0);">11</div>
<div style="position:absolute;left:16px;top:438px;font-size:11.5px;line-height:11.5px;color:#4a4a4a;font-weight:400;white-space:nowrap;transform:translateX(-50%) scaleX(1.0);">12</div>
<div style="position:absolute;left:16px;top:459px;font-size:11.5px;line-height:11.5px;color:#4a4a4a;font-weight:400;white-space:nowrap;transform:translateX(-50%) scaleX(1.0);">13</div>
<div style="position:absolute;left:16px;top:480px;font-size:11.5px;line-height:11.5px;color:#4a4a4a;font-weight:400;white-space:nowrap;transform:translateX(-50%) scaleX(1.0);">14</div>
<div style="position:absolute;left:16px;top:501px;font-size:11.5px;line-height:11.5px;color:#4a4a4a;font-weight:400;white-space:nowrap;transform:translateX(-50%) scaleX(1.0);">15</div>
<div style="position:absolute;left:16px;top:522px;font-size:11.5px;line-height:11.5px;color:#4a4a4a;font-weight:400;white-space:nowrap;transform:translateX(-50%) scaleX(1.0);">16</div>
<div style="position:absolute;left:16px;top:543px;font-size:11.5px;line-height:11.5px;color:#4a4a4a;font-weight:400;white-space:nowrap;transform:translateX(-50%) scaleX(1.0);">17</div>
<div style="position:absolute;left:16px;top:564px;font-size:11.5px;line-height:11.5px;color:#4a4a4a;font-weight:400;white-space:nowrap;transform:translateX(-50%) scaleX(1.0);">18</div>
<div style="position:absolute;left:16px;top:585px;font-size:11.5px;line-height:11.5px;color:#4a4a4a;font-weight:400;white-space:nowrap;transform:translateX(-50%) scaleX(1.0);">19</div>
<div style="position:absolute;left:16px;top:606px;font-size:11.5px;line-height:11.5px;color:#4a4a4a;font-weight:400;white-space:nowrap;transform:translateX(-50%) scaleX(1.0);">20</div>
<div style="position:absolute;left:16px;top:627px;font-size:11.5px;line-height:11.5px;color:#4a4a4a;font-weight:400;white-space:nowrap;transform:translateX(-50%) scaleX(1.0);">21</div>
<div style="position:absolute;left:16px;top:648px;font-size:11.5px;line-height:11.5px;color:#4a4a4a;font-weight:400;white-space:nowrap;transform:translateX(-50%) scaleX(1.0);">22</div>
<div style="position:absolute;left:16px;top:669px;font-size:11.5px;line-height:11.5px;color:#4a4a4a;font-weight:400;white-space:nowrap;transform:translateX(-50%) scaleX(1.0);">23</div>
<div style="position:absolute;left:16px;top:690px;font-size:11.5px;line-height:11.5px;color:#4a4a4a;font-weight:400;white-space:nowrap;transform:translateX(-50%) scaleX(1.0);">24</div>
<div style="position:absolute;left:16px;top:711px;font-size:11.5px;line-height:11.5px;color:#4a4a4a;font-weight:400;white-space:nowrap;transform:translateX(-50%) scaleX(1.0);">25</div>
<div style="position:absolute;left:16px;top:732px;font-size:11.5px;line-height:11.5px;color:#4a4a4a;font-weight:400;white-space:nowrap;transform:translateX(-50%) scaleX(1.0);">26</div>
<div style="position:absolute;left:16px;top:753px;font-size:11.5px;line-height:11.5px;color:#4a4a4a;font-weight:400;white-space:nowrap;transform:translateX(-50%) scaleX(1.0);">27</div>
<div style="position:absolute;left:16px;top:774px;font-size:11.5px;line-height:11.5px;color:#4a4a4a;font-weight:400;white-space:nowrap;transform:translateX(-50%) scaleX(1.0);">28</div>
<div style="position:absolute;left:28px;top:177px;width:258px;height:43px;background:#e2eedb;"></div>
<div style="position:absolute;left:286px;top:177px;width:155px;height:43px;background:#ddd8c9;"></div>
<div style="position:absolute;left:28px;top:220px;width:94px;height:505px;background:#eeeef7;"></div>
<div style="position:absolute;left:286px;top:220px;width:155px;height:505px;background:#e8edf9;"></div>
<div style="position:absolute;left:75.5px;top:191px;font-size:15px;line-height:15px;color:#000;font-weight:700;white-space:nowrap;transform:translateX(-50%) scaleX(1.0);">Месяц/год</div>
<div style="position:absolute;left:204.5px;top:181px;font-size:15px;line-height:15px;color:#000;font-weight:700;white-space:nowrap;transform:translateX(-50%) scaleX(0.905);">Чистая прибыль,</div>
<div style="position:absolute;left:204.5px;top:202px;font-size:15px;line-height:15px;color:#000;font-weight:700;white-space:nowrap;transform:translateX(-50%) scaleX(0.93);">тыс. руб.</div>
<div style="position:absolute;left:362.5px;top:181px;font-size:15px;line-height:15px;color:#000;font-weight:700;white-space:nowrap;transform:translateX(-50%) scaleX(0.95);">Общая выручка,</div>
<div style="position:absolute;left:363.5px;top:202px;font-size:15px;line-height:15px;color:#000;font-weight:700;white-space:nowrap;transform:translateX(-50%) scaleX(0.93);">тыс. руб.</div>
<div style="position:absolute;left:122px;top:176px;width:1px;height:44px;background:#111;"></div>
<div style="position:absolute;left:28px;top:241px;width:413px;height:1px;background:#111;"></div>
<div style="position:absolute;left:28px;top:262px;width:413px;height:1px;background:#111;"></div>
<div style="position:absolute;left:28px;top:283px;width:413px;height:1px;background:#111;"></div>
<div style="position:absolute;left:28px;top:304px;width:413px;height:1px;background:#111;"></div>
<div style="position:absolute;left:28px;top:325px;width:413px;height:1px;background:#111;"></div>
<div style="position:absolute;left:28px;top:346px;width:413px;height:1px;background:#111;"></div>
<div style="position:absolute;left:28px;top:367px;width:413px;height:1px;background:#111;"></div>
<div style="position:absolute;left:28px;top:388px;width:413px;height:1px;background:#111;"></div>
<div style="position:absolute;left:28px;top:409px;width:413px;height:1px;background:#111;"></div>
<div style="position:absolute;left:28px;top:430px;width:413px;height:1px;background:#111;"></div>
<div style="position:absolute;left:28px;top:451px;width:413px;height:1px;background:#111;"></div>
<div style="position:absolute;left:28px;top:472px;width:413px;height:1px;background:#111;"></div>
<div style="position:absolute;left:28px;top:493px;width:413px;height:1px;background:#111;"></div>
<div style="position:absolute;left:28px;top:514px;width:413px;height:1px;background:#111;"></div>
<div style="position:absolute;left:28px;top:535px;width:413px;height:1px;background:#111;"></div>
<div style="position:absolute;left:28px;top:556px;width:413px;height:1px;background:#111;"></div>
<div style="position:absolute;left:28px;top:577px;width:413px;height:1px;background:#111;"></div>
<div style="position:absolute;left:28px;top:598px;width:413px;height:1px;background:#111;"></div>
<div style="position:absolute;left:28px;top:619px;width:413px;height:1px;background:#111;"></div>
<div style="position:absolute;left:28px;top:640px;width:413px;height:1px;background:#111;"></div>
<div style="position:absolute;left:28px;top:661px;width:413px;height:1px;background:#111;"></div>
<div style="position:absolute;left:28px;top:682px;width:413px;height:1px;background:#111;"></div>
<div style="position:absolute;left:28px;top:703px;width:413px;height:1px;background:#111;"></div>
<div style="position:absolute;left:28px;top:724px;width:413px;height:1px;background:#111;"></div>
<div style="position:absolute;left:28px;top:220px;width:413px;height:1px;background:#111;"></div>
<div style="position:absolute;left:120px;top:225px;font-size:14.6px;line-height:14.6px;color:#000;font-weight:400;white-space:nowrap;transform:translateX(-100%) scaleX(0.99);transform-origin:right;">янв.19</div>
<div style="position:absolute;left:283px;top:225px;font-size:14.6px;line-height:14.6px;color:#000;font-weight:400;white-space:nowrap;transform:translateX(-100%) scaleX(0.96);transform-origin:right;">345</div>
<div style="position:absolute;left:438px;top:225px;font-size:14.6px;line-height:14.6px;color:#000;font-weight:400;white-space:nowrap;transform:translateX(-100%) scaleX(0.96);transform-origin:right;">1 725</div>
<div style="position:absolute;left:120px;top:246px;font-size:14.6px;line-height:14.6px;color:#000;font-weight:400;white-space:nowrap;transform:translateX(-100%) scaleX(0.99);transform-origin:right;">февр.19</div>
<div style="position:absolute;left:283px;top:246px;font-size:14.6px;line-height:14.6px;color:#000;font-weight:400;white-space:nowrap;transform:translateX(-100%) scaleX(0.96);transform-origin:right;">334</div>
<div style="position:absolute;left:438px;top:246px;font-size:14.6px;line-height:14.6px;color:#000;font-weight:400;white-space:nowrap;transform:translateX(-100%) scaleX(0.96);transform-origin:right;">2 004</div>
<div style="position:absolute;left:120px;top:267px;font-size:14.6px;line-height:14.6px;color:#000;font-weight:400;white-space:nowrap;transform:translateX(-100%) scaleX(0.99);transform-origin:right;">март.19</div>
<div style="position:absolute;left:283px;top:267px;font-size:14.6px;line-height:14.6px;color:#000;font-weight:400;white-space:nowrap;transform:translateX(-100%) scaleX(0.96);transform-origin:right;">360</div>
<div style="position:absolute;left:438px;top:267px;font-size:14.6px;line-height:14.6px;color:#000;font-weight:400;white-space:nowrap;transform:translateX(-100%) scaleX(0.96);transform-origin:right;">2 340</div>
<div style="position:absolute;left:120px;top:288px;font-size:14.6px;line-height:14.6px;color:#000;font-weight:400;white-space:nowrap;transform:translateX(-100%) scaleX(0.99);transform-origin:right;">апр.19</div>
<div style="position:absolute;left:283px;top:288px;font-size:14.6px;line-height:14.6px;color:#000;font-weight:400;white-space:nowrap;transform:translateX(-100%) scaleX(0.96);transform-origin:right;">487</div>
<div style="position:absolute;left:438px;top:288px;font-size:14.6px;line-height:14.6px;color:#000;font-weight:400;white-space:nowrap;transform:translateX(-100%) scaleX(0.96);transform-origin:right;">2 192</div>
<div style="position:absolute;left:120px;top:309px;font-size:14.6px;line-height:14.6px;color:#000;font-weight:400;white-space:nowrap;transform:translateX(-100%) scaleX(0.99);transform-origin:right;">май.19</div>
<div style="position:absolute;left:283px;top:309px;font-size:14.6px;line-height:14.6px;color:#000;font-weight:400;white-space:nowrap;transform:translateX(-100%) scaleX(0.96);transform-origin:right;">528</div>
<div style="position:absolute;left:438px;top:309px;font-size:14.6px;line-height:14.6px;color:#000;font-weight:400;white-space:nowrap;transform:translateX(-100%) scaleX(0.96);transform-origin:right;">2 112</div>
<div style="position:absolute;left:120px;top:330px;font-size:14.6px;line-height:14.6px;color:#000;font-weight:400;white-space:nowrap;transform:translateX(-100%) scaleX(0.99);transform-origin:right;">июнь.19</div>
<div style="position:absolute;left:283px;top:330px;font-size:14.6px;line-height:14.6px;color:#000;font-weight:400;white-space:nowrap;transform:translateX(-100%) scaleX(0.96);transform-origin:right;">701</div>
<div style="position:absolute;left:438px;top:330px;font-size:14.6px;line-height:14.6px;color:#000;font-weight:400;white-space:nowrap;transform:translateX(-100%) scaleX(0.96);transform-origin:right;">3 856</div>
<div style="position:absolute;left:120px;top:351px;font-size:14.6px;line-height:14.6px;color:#000;font-weight:400;white-space:nowrap;transform:translateX(-100%) scaleX(0.99);transform-origin:right;">июль.19</div>
<div style="position:absolute;left:283px;top:351px;font-size:14.6px;line-height:14.6px;color:#000;font-weight:400;white-space:nowrap;transform:translateX(-100%) scaleX(0.96);transform-origin:right;">689</div>
<div style="position:absolute;left:438px;top:351px;font-size:14.6px;line-height:14.6px;color:#000;font-weight:400;white-space:nowrap;transform:translateX(-100%) scaleX(0.96);transform-origin:right;">5 168</div>
<div style="position:absolute;left:120px;top:372px;font-size:14.6px;line-height:14.6px;color:#000;font-weight:400;white-space:nowrap;transform:translateX(-100%) scaleX(0.99);transform-origin:right;">авг.19</div>
<div style="position:absolute;left:283px;top:372px;font-size:14.6px;line-height:14.6px;color:#000;font-weight:400;white-space:nowrap;transform:translateX(-100%) scaleX(0.96);transform-origin:right;">678</div>
<div style="position:absolute;left:438px;top:372px;font-size:14.6px;line-height:14.6px;color:#000;font-weight:400;white-space:nowrap;transform:translateX(-100%) scaleX(0.96);transform-origin:right;">4 068</div>
<div style="position:absolute;left:120px;top:393px;font-size:14.6px;line-height:14.6px;color:#000;font-weight:400;white-space:nowrap;transform:translateX(-100%) scaleX(0.99);transform-origin:right;">сент.19</div>
<div style="position:absolute;left:283px;top:393px;font-size:14.6px;line-height:14.6px;color:#000;font-weight:400;white-space:nowrap;transform:translateX(-100%) scaleX(0.96);transform-origin:right;">821</div>
<div style="position:absolute;left:438px;top:393px;font-size:14.6px;line-height:14.6px;color:#000;font-weight:400;white-space:nowrap;transform:translateX(-100%) scaleX(0.96);transform-origin:right;">6 979</div>
<div style="position:absolute;left:120px;top:414px;font-size:14.6px;line-height:14.6px;color:#000;font-weight:400;white-space:nowrap;transform:translateX(-100%) scaleX(0.99);transform-origin:right;">окт.19</div>
<div style="position:absolute;left:283px;top:414px;font-size:14.6px;line-height:14.6px;color:#000;font-weight:400;white-space:nowrap;transform:translateX(-100%) scaleX(0.96);transform-origin:right;">883</div>
<div style="position:absolute;left:438px;top:414px;font-size:14.6px;line-height:14.6px;color:#000;font-weight:400;white-space:nowrap;transform:translateX(-100%) scaleX(0.96);transform-origin:right;">7 506</div>
<div style="position:absolute;left:120px;top:435px;font-size:14.6px;line-height:14.6px;color:#000;font-weight:400;white-space:nowrap;transform:translateX(-100%) scaleX(0.99);transform-origin:right;">нояб.19</div>
<div style="position:absolute;left:283px;top:435px;font-size:14.6px;line-height:14.6px;color:#000;font-weight:400;white-space:nowrap;transform:translateX(-100%) scaleX(0.96);transform-origin:right;">1 029</div>
<div style="position:absolute;left:438px;top:435px;font-size:14.6px;line-height:14.6px;color:#000;font-weight:400;white-space:nowrap;transform:translateX(-100%) scaleX(0.96);transform-origin:right;">8 232</div>
<div style="position:absolute;left:120px;top:456px;font-size:14.6px;line-height:14.6px;color:#000;font-weight:400;white-space:nowrap;transform:translateX(-100%) scaleX(0.99);transform-origin:right;">дек.19</div>
<div style="position:absolute;left:283px;top:456px;font-size:14.6px;line-height:14.6px;color:#000;font-weight:400;white-space:nowrap;transform:translateX(-100%) scaleX(0.96);transform-origin:right;">998</div>
<div style="position:absolute;left:438px;top:456px;font-size:14.6px;line-height:14.6px;color:#000;font-weight:400;white-space:nowrap;transform:translateX(-100%) scaleX(0.96);transform-origin:right;">8 483</div>
<div style="position:absolute;left:120px;top:477px;font-size:14.6px;line-height:14.6px;color:#000;font-weight:400;white-space:nowrap;transform:translateX(-100%) scaleX(0.99);transform-origin:right;">янв.20</div>
<div style="position:absolute;left:283px;top:477px;font-size:14.6px;line-height:14.6px;color:#000;font-weight:400;white-space:nowrap;transform:translateX(-100%) scaleX(0.96);transform-origin:right;">1 389</div>
<div style="position:absolute;left:438px;top:477px;font-size:14.6px;line-height:14.6px;color:#000;font-weight:400;white-space:nowrap;transform:translateX(-100%) scaleX(0.96);transform-origin:right;">8 334</div>
<div style="position:absolute;left:120px;top:498px;font-size:14.6px;line-height:14.6px;color:#000;font-weight:400;white-space:nowrap;transform:translateX(-100%) scaleX(0.99);transform-origin:right;">февр.20</div>
<div style="position:absolute;left:283px;top:498px;font-size:14.6px;line-height:14.6px;color:#000;font-weight:400;white-space:nowrap;transform:translateX(-100%) scaleX(0.96);transform-origin:right;">1 690</div>
<div style="position:absolute;left:438px;top:498px;font-size:14.6px;line-height:14.6px;color:#000;font-weight:400;white-space:nowrap;transform:translateX(-100%) scaleX(0.96);transform-origin:right;">9 295</div>
<div style="position:absolute;left:120px;top:519px;font-size:14.6px;line-height:14.6px;color:#000;font-weight:400;white-space:nowrap;transform:translateX(-100%) scaleX(0.99);transform-origin:right;">март.20</div>
<div style="position:absolute;left:283px;top:519px;font-size:14.6px;line-height:14.6px;color:#000;font-weight:400;white-space:nowrap;transform:translateX(-100%) scaleX(0.96);transform-origin:right;">1 893</div>
<div style="position:absolute;left:438px;top:519px;font-size:14.6px;line-height:14.6px;color:#000;font-weight:400;white-space:nowrap;transform:translateX(-100%) scaleX(0.96);transform-origin:right;">5 679</div>
<div style="position:absolute;left:120px;top:540px;font-size:14.6px;line-height:14.6px;color:#000;font-weight:400;white-space:nowrap;transform:translateX(-100%) scaleX(0.99);transform-origin:right;">апр.20</div>
<div style="position:absolute;left:283px;top:540px;font-size:14.6px;line-height:14.6px;color:#000;font-weight:400;white-space:nowrap;transform:translateX(-100%) scaleX(0.96);transform-origin:right;">1 413</div>
<div style="position:absolute;left:438px;top:540px;font-size:14.6px;line-height:14.6px;color:#000;font-weight:400;white-space:nowrap;transform:translateX(-100%) scaleX(0.96);transform-origin:right;">12 011</div>
<div style="position:absolute;left:120px;top:561px;font-size:14.6px;line-height:14.6px;color:#000;font-weight:400;white-space:nowrap;transform:translateX(-100%) scaleX(0.99);transform-origin:right;">май.20</div>
<div style="position:absolute;left:283px;top:561px;font-size:14.6px;line-height:14.6px;color:#000;font-weight:400;white-space:nowrap;transform:translateX(-100%) scaleX(0.96);transform-origin:right;">2 221</div>
<div style="position:absolute;left:438px;top:561px;font-size:14.6px;line-height:14.6px;color:#000;font-weight:400;white-space:nowrap;transform:translateX(-100%) scaleX(0.96);transform-origin:right;">7 774</div>
<div style="position:absolute;left:120px;top:582px;font-size:14.6px;line-height:14.6px;color:#000;font-weight:400;white-space:nowrap;transform:translateX(-100%) scaleX(0.99);transform-origin:right;">июнь.20</div>
<div style="position:absolute;left:283px;top:582px;font-size:14.6px;line-height:14.6px;color:#000;font-weight:400;white-space:nowrap;transform:translateX(-100%) scaleX(0.96);transform-origin:right;">2 199</div>
<div style="position:absolute;left:438px;top:582px;font-size:14.6px;line-height:14.6px;color:#000;font-weight:400;white-space:nowrap;transform:translateX(-100%) scaleX(0.96);transform-origin:right;">5 498</div>
<div style="position:absolute;left:120px;top:603px;font-size:14.6px;line-height:14.6px;color:#000;font-weight:400;white-space:nowrap;transform:translateX(-100%) scaleX(0.99);transform-origin:right;">июль.20</div>
<div style="position:absolute;left:283px;top:603px;font-size:14.6px;line-height:14.6px;color:#000;font-weight:400;white-space:nowrap;transform:translateX(-100%) scaleX(0.96);transform-origin:right;">2 145</div>
<div style="position:absolute;left:438px;top:603px;font-size:14.6px;line-height:14.6px;color:#000;font-weight:400;white-space:nowrap;transform:translateX(-100%) scaleX(0.96);transform-origin:right;">13 943</div>
<div style="position:absolute;left:120px;top:624px;font-size:14.6px;line-height:14.6px;color:#000;font-weight:400;white-space:nowrap;transform:translateX(-100%) scaleX(0.99);transform-origin:right;">авг.20</div>
<div style="position:absolute;left:283px;top:624px;font-size:14.6px;line-height:14.6px;color:#000;font-weight:400;white-space:nowrap;transform:translateX(-100%) scaleX(0.96);transform-origin:right;">2 077</div>
<div style="position:absolute;left:438px;top:624px;font-size:14.6px;line-height:14.6px;color:#000;font-weight:400;white-space:nowrap;transform:translateX(-100%) scaleX(0.96);transform-origin:right;">12 462</div>
<div style="position:absolute;left:120px;top:645px;font-size:14.6px;line-height:14.6px;color:#000;font-weight:400;white-space:nowrap;transform:translateX(-100%) scaleX(0.99);transform-origin:right;">сент.20</div>
<div style="position:absolute;left:283px;top:645px;font-size:14.6px;line-height:14.6px;color:#000;font-weight:400;white-space:nowrap;transform:translateX(-100%) scaleX(0.96);transform-origin:right;">1 998</div>
<div style="position:absolute;left:438px;top:645px;font-size:14.6px;line-height:14.6px;color:#000;font-weight:400;white-space:nowrap;transform:translateX(-100%) scaleX(0.96);transform-origin:right;">11 988</div>
<div style="position:absolute;left:120px;top:666px;font-size:14.6px;line-height:14.6px;color:#000;font-weight:400;white-space:nowrap;transform:translateX(-100%) scaleX(0.99);transform-origin:right;">окт.20</div>
<div style="position:absolute;left:283px;top:666px;font-size:14.6px;line-height:14.6px;color:#000;font-weight:400;white-space:nowrap;transform:translateX(-100%) scaleX(0.96);transform-origin:right;">2 287</div>
<div style="position:absolute;left:438px;top:666px;font-size:14.6px;line-height:14.6px;color:#000;font-weight:400;white-space:nowrap;transform:translateX(-100%) scaleX(0.96);transform-origin:right;">12 579</div>
<div style="position:absolute;left:120px;top:687px;font-size:14.6px;line-height:14.6px;color:#000;font-weight:400;white-space:nowrap;transform:translateX(-100%) scaleX(0.99);transform-origin:right;">нояб.20</div>
<div style="position:absolute;left:283px;top:687px;font-size:14.6px;line-height:14.6px;color:#000;font-weight:400;white-space:nowrap;transform:translateX(-100%) scaleX(0.96);transform-origin:right;">2 487</div>
<div style="position:absolute;left:438px;top:687px;font-size:14.6px;line-height:14.6px;color:#000;font-weight:400;white-space:nowrap;transform:translateX(-100%) scaleX(0.96);transform-origin:right;">23 627</div>
<div style="position:absolute;left:120px;top:708px;font-size:14.6px;line-height:14.6px;color:#000;font-weight:400;white-space:nowrap;transform:translateX(-100%) scaleX(0.99);transform-origin:right;">дек.20</div>
<div style="position:absolute;left:283px;top:708px;font-size:14.6px;line-height:14.6px;color:#000;font-weight:400;white-space:nowrap;transform:translateX(-100%) scaleX(0.96);transform-origin:right;">2 567</div>
<div style="position:absolute;left:438px;top:708px;font-size:14.6px;line-height:14.6px;color:#000;font-weight:400;white-space:nowrap;transform:translateX(-100%) scaleX(0.96);transform-origin:right;">25 670</div>
<div style="position:absolute;left:28px;top:219px;width:94px;height:2px;background:#7b5ec6;"></div>
<div style="position:absolute;left:121px;top:219px;width:2px;height:506px;background:#7b5ec6;"></div>
<div style="position:absolute;left:28px;top:723px;width:94px;height:2px;background:#7b5ec6;"></div>
<div style="position:absolute;left:119px;top:217px;width:6px;height:6px;background:#7b5ec6;"></div>
<div style="position:absolute;left:119px;top:721px;width:6px;height:6px;background:#7b5ec6;"></div>
<div style="position:absolute;left:28px;top:217px;width:3px;height:5px;background:#7b5ec6;"></div>
<div style="position:absolute;left:28px;top:721px;width:3px;height:5px;background:#7b5ec6;"></div>
<div style="position:absolute;left:284px;top:176px;width:2px;height:44px;background:#cc3340;"></div>
<div style="position:absolute;left:440px;top:176px;width:2px;height:44px;background:#cc3340;"></div>
<div style="position:absolute;left:284px;top:176px;width:5px;height:3px;background:#cc3340;"></div>
<div style="position:absolute;left:438px;top:176px;width:5px;height:3px;background:#cc3340;"></div>
<div style="position:absolute;left:286px;top:219px;width:155px;height:2px;background:#3a70d4;"></div>
<div style="position:absolute;left:284px;top:219px;width:2px;height:506px;background:#3a70d4;"></div>
<div style="position:absolute;left:440px;top:219px;width:2px;height:506px;background:#3a70d4;"></div>
<div style="position:absolute;left:286px;top:723px;width:155px;height:2px;background:#3a70d4;"></div>
<div style="position:absolute;left:283px;top:217px;width:6px;height:6px;background:#3a70d4;"></div>
<div style="position:absolute;left:438px;top:217px;width:6px;height:6px;background:#3a70d4;"></div>
<div style="position:absolute;left:283px;top:721px;width:6px;height:6px;background:#3a70d4;"></div>
<div style="position:absolute;left:438px;top:721px;width:6px;height:6px;background:#3a70d4;"></div>
<div style="position:absolute;left:462px;top:216px;width:420px;height:516px;overflow:hidden;">
<svg style="position:absolute;left:0;top:0" width="430" height="514"><rect x="0.5" y="0.5" width="430" height="513" fill="#fff" stroke="#b9b9b9" stroke-width="1"/><rect x="4.5" y="4.5" width="430" height="505" fill="#fff" stroke="#c9c9c9" stroke-width="1"/><line x1="38.0" y1="40.5" x2="430" y2="40.5" stroke="#d9d9d9" stroke-width="1"/><line x1="38.0" y1="105.5" x2="430" y2="105.5" stroke="#d9d9d9" stroke-width="1"/><line x1="38.0" y1="170.5" x2="430" y2="170.5" stroke="#d9d9d9" stroke-width="1"/><line x1="38.0" y1="236.5" x2="430" y2="236.5" stroke="#d9d9d9" stroke-width="1"/><line x1="38.0" y1="301.5" x2="430" y2="301.5" stroke="#d9d9d9" stroke-width="1"/><line x1="38.0" y1="366.5" x2="430" y2="366.5" stroke="#d9d9d9" stroke-width="1"/><line x1="38.0" y1="431.5" x2="430" y2="431.5" stroke="#d9d9d9" stroke-width="1"/><line x1="38.5" y1="432" x2="38.5" y2="436" stroke="#d0d0d0" stroke-width="1"/><line x1="62.5" y1="432" x2="62.5" y2="436" stroke="#d0d0d0" stroke-width="1"/><line x1="87.5" y1="432" x2="87.5" y2="436" stroke="#d0d0d0" stroke-width="1"/><line x1="111.5" y1="432" x2="111.5" y2="436" stroke="#d0d0d0" stroke-width="1"/><line x1="136.5" y1="432" x2="136.5" y2="436" stroke="#d0d0d0" stroke-width="1"/><line x1="160.5" y1="432" x2="160.5" y2="436" stroke="#d0d0d0" stroke-width="1"/><line x1="185.5" y1="432" x2="185.5" y2="436" stroke="#d0d0d0" stroke-width="1"/><line x1="209.5" y1="432" x2="209.5" y2="436" stroke="#d0d0d0" stroke-width="1"/><line x1="234.5" y1="432" x2="234.5" y2="436" stroke="#d0d0d0" stroke-width="1"/><line x1="258.5" y1="432" x2="258.5" y2="436" stroke="#d0d0d0" stroke-width="1"/><line x1="283.5" y1="432" x2="283.5" y2="436" stroke="#d0d0d0" stroke-width="1"/><line x1="307.5" y1="432" x2="307.5" y2="436" stroke="#d0d0d0" stroke-width="1"/><line x1="332.5" y1="432" x2="332.5" y2="436" stroke="#d0d0d0" stroke-width="1"/><line x1="356.5" y1="432" x2="356.5" y2="436" stroke="#d0d0d0" stroke-width="1"/><line x1="381.5" y1="432" x2="381.5" y2="436" stroke="#d0d0d0" stroke-width="1"/><line x1="405.5" y1="432" x2="405.5" y2="436" stroke="#d0d0d0" stroke-width="1"/><line x1="430.5" y1="432" x2="430.5" y2="436" stroke="#d0d0d0" stroke-width="1"/><polyline points="50.2,386.8 74.7,388.2 99.2,384.8 123.6,368.2 148.1,362.9 172.6,340.3 197.1,341.9 221.5,343.3 246.0,324.6 270.5,316.5 294.9,297.5 319.4,301.5 343.9,250.5 368.3,211.2 392.8,184.7 417.3,247.4 441.8,141.9 466.2,144.8 490.7,151.8 515.2,160.7 539.6,171.0 564.1,133.3 588.6,107.2 613.0,96.7" fill="none" stroke="#3f62c9" stroke-width="2.3" stroke-linejoin="round"/><polyline points="50.2,409.3 74.7,405.6 99.2,401.3 123.6,403.2 148.1,404.2 172.6,381.5 197.1,364.3 221.5,378.7 246.0,340.7 270.5,333.8 294.9,324.3 319.4,321.1 343.9,323.0 368.3,310.5 392.8,357.7 417.3,275.0 441.8,330.3 466.2,360.0 490.7,249.8 515.2,269.1 539.6,275.3 564.1,267.6 588.6,123.4 613.0,96.7" fill="none" stroke="#ee7d38" stroke-width="2.3" stroke-linejoin="round"/><circle cx="47.9" cy="406.0" r="2.1" fill="#d8d8d8" stroke="#1f7ee3" stroke-width="1.5"/><circle cx="47.9" cy="410.6" r="2.1" fill="#d8d8d8" stroke="#1f7ee3" stroke-width="1.5"/><circle cx="52.5" cy="406.0" r="2.1" fill="#d8d8d8" stroke="#1f7ee3" stroke-width="1.5"/><circle cx="52.5" cy="410.6" r="2.1" fill="#d8d8d8" stroke="#1f7ee3" stroke-width="1.5"/><circle cx="72.4" cy="402.3" r="2.1" fill="#d8d8d8" stroke="#1f7ee3" stroke-width="1.5"/><circle cx="72.4" cy="406.9" r="2.1" fill="#d8d8d8" stroke="#1f7ee3" stroke-width="1.5"/><circle cx="77.0" cy="402.3" r="2.1" fill="#d8d8d8" stroke="#1f7ee3" stroke-width="1.5"/><circle cx="77.0" cy="406.9" r="2.1" fill="#d8d8d8" stroke="#1f7ee3" stroke-width="1.5"/><circle cx="121.3" cy="399.9" r="2.1" fill="#d8d8d8" stroke="#1f7ee3" stroke-width="1.5"/><circle cx="121.3" cy="404.5" r="2.1" fill="#d8d8d8" stroke="#1f7ee3" stroke-width="1.5"/><circle cx="125.9" cy="399.9" r="2.1" fill="#d8d8d8" stroke="#1f7ee3" stroke-width="1.5"/><circle cx="125.9" cy="404.5" r="2.1" fill="#d8d8d8" stroke="#1f7ee3" stroke-width="1.5"/><circle cx="145.8" cy="400.9" r="2.1" fill="#d8d8d8" stroke="#1f7ee3" stroke-width="1.5"/><circle cx="145.8" cy="405.5" r="2.1" fill="#d8d8d8" stroke="#1f7ee3" stroke-width="1.5"/><circle cx="150.4" cy="400.9" r="2.1" fill="#d8d8d8" stroke="#1f7ee3" stroke-width="1.5"/><circle cx="150.4" cy="405.5" r="2.1" fill="#d8d8d8" stroke="#1f7ee3" stroke-width="1.5"/><circle cx="194.8" cy="361.0" r="2.1" fill="#d8d8d8" stroke="#1f7ee3" stroke-width="1.5"/><circle cx="194.8" cy="365.6" r="2.1" fill="#d8d8d8" stroke="#1f7ee3" stroke-width="1.5"/><circle cx="199.4" cy="361.0" r="2.1" fill="#d8d8d8" stroke="#1f7ee3" stroke-width="1.5"/><circle cx="199.4" cy="365.6" r="2.1" fill="#d8d8d8" stroke="#1f7ee3" stroke-width="1.5"/><circle cx="219.2" cy="375.4" r="2.1" fill="#d8d8d8" stroke="#1f7ee3" stroke-width="1.5"/><circle cx="219.2" cy="380.0" r="2.1" fill="#d8d8d8" stroke="#1f7ee3" stroke-width="1.5"/><circle cx="223.8" cy="375.4" r="2.1" fill="#d8d8d8" stroke="#1f7ee3" stroke-width="1.5"/><circle cx="223.8" cy="380.0" r="2.1" fill="#d8d8d8" stroke="#1f7ee3" stroke-width="1.5"/><circle cx="268.2" cy="330.5" r="2.1" fill="#d8d8d8" stroke="#1f7ee3" stroke-width="1.5"/><circle cx="268.2" cy="335.1" r="2.1" fill="#d8d8d8" stroke="#1f7ee3" stroke-width="1.5"/><circle cx="272.8" cy="330.5" r="2.1" fill="#d8d8d8" stroke="#1f7ee3" stroke-width="1.5"/><circle cx="272.8" cy="335.1" r="2.1" fill="#d8d8d8" stroke="#1f7ee3" stroke-width="1.5"/><circle cx="292.6" cy="321.0" r="2.1" fill="#d8d8d8" stroke="#1f7ee3" stroke-width="1.5"/><circle cx="292.6" cy="325.6" r="2.1" fill="#d8d8d8" stroke="#1f7ee3" stroke-width="1.5"/><circle cx="297.2" cy="321.0" r="2.1" fill="#d8d8d8" stroke="#1f7ee3" stroke-width="1.5"/><circle cx="297.2" cy="325.6" r="2.1" fill="#d8d8d8" stroke="#1f7ee3" stroke-width="1.5"/><circle cx="341.6" cy="319.7" r="2.1" fill="#d8d8d8" stroke="#1f7ee3" stroke-width="1.5"/><circle cx="341.6" cy="324.3" r="2.1" fill="#d8d8d8" stroke="#1f7ee3" stroke-width="1.5"/><circle cx="346.2" cy="319.7" r="2.1" fill="#d8d8d8" stroke="#1f7ee3" stroke-width="1.5"/><circle cx="346.2" cy="324.3" r="2.1" fill="#d8d8d8" stroke="#1f7ee3" stroke-width="1.5"/><circle cx="366.0" cy="307.2" r="2.1" fill="#d8d8d8" stroke="#1f7ee3" stroke-width="1.5"/><circle cx="366.0" cy="311.8" r="2.1" fill="#d8d8d8" stroke="#1f7ee3" stroke-width="1.5"/><circle cx="370.6" cy="307.2" r="2.1" fill="#d8d8d8" stroke="#1f7ee3" stroke-width="1.5"/><circle cx="370.6" cy="311.8" r="2.1" fill="#d8d8d8" stroke="#1f7ee3" stroke-width="1.5"/><circle cx="415.0" cy="271.7" r="2.1" fill="#d8d8d8" stroke="#1f7ee3" stroke-width="1.5"/><circle cx="415.0" cy="276.3" r="2.1" fill="#d8d8d8" stroke="#1f7ee3" stroke-width="1.5"/><circle cx="419.6" cy="271.7" r="2.1" fill="#d8d8d8" stroke="#1f7ee3" stroke-width="1.5"/><circle cx="419.6" cy="276.3" r="2.1" fill="#d8d8d8" stroke="#1f7ee3" stroke-width="1.5"/><line x1="244" y1="483" x2="265" y2="483" stroke="#3f62c9" stroke-width="2.3"/><line x1="343" y1="483" x2="364" y2="483" stroke="#ee7d38" stroke-width="2.3"/></svg>
<div style="position:absolute;left:269px;top:14px;font-size:13px;line-height:13px;color:#595959;font-weight:400;white-space:nowrap;transform:scaleX(0.99);transform-origin:left;">Название диаграммы</div>
<div style="position:absolute;left:30px;top:427.29999999999995px;font-size:8.6px;line-height:8.6px;color:#595959;font-weight:400;white-space:nowrap;transform:translateX(-100%) scaleX(0.95);transform-origin:right;">0</div>
<div style="position:absolute;left:30px;top:362.0333333333333px;font-size:8.6px;line-height:8.6px;color:#595959;font-weight:400;white-space:nowrap;transform:translateX(-100%) scaleX(0.95);transform-origin:right;">500</div>
<div style="position:absolute;left:30px;top:296.76666666666665px;font-size:8.6px;line-height:8.6px;color:#595959;font-weight:400;white-space:nowrap;transform:translateX(-100%) scaleX(0.95);transform-origin:right;">1 000</div>
<div style="position:absolute;left:30px;top:231.5px;font-size:8.6px;line-height:8.6px;color:#595959;font-weight:400;white-space:nowrap;transform:translateX(-100%) scaleX(0.95);transform-origin:right;">1 500</div>
<div style="position:absolute;left:30px;top:166.2333333333333px;font-size:8.6px;line-height:8.6px;color:#595959;font-weight:400;white-space:nowrap;transform:translateX(-100%) scaleX(0.95);transform-origin:right;">2 000</div>
<div style="position:absolute;left:30px;top:100.96666666666664px;font-size:8.6px;line-height:8.6px;color:#595959;font-weight:400;white-space:nowrap;transform:translateX(-100%) scaleX(0.95);transform-origin:right;">2 500</div>
<div style="position:absolute;left:30px;top:35.69999999999999px;font-size:8.6px;line-height:8.6px;color:#595959;font-weight:400;white-space:nowrap;transform:translateX(-100%) scaleX(0.95);transform-origin:right;">3 000</div>
<div style="position:absolute;left:48.2px;top:439px;font-size:8.6px;line-height:9px;color:#595959;white-space:nowrap;transform-origin:100% 0;transform:translateX(-100%) rotate(-45deg) scaleX(0.95);">янв.19</div>
<div style="position:absolute;left:72.7px;top:439px;font-size:8.6px;line-height:9px;color:#595959;white-space:nowrap;transform-origin:100% 0;transform:translateX(-100%) rotate(-45deg) scaleX(0.95);">февр.19</div>
<div style="position:absolute;left:97.2px;top:439px;font-size:8.6px;line-height:9px;color:#595959;white-space:nowrap;transform-origin:100% 0;transform:translateX(-100%) rotate(-45deg) scaleX(0.95);">март.19</div>
<div style="position:absolute;left:121.6px;top:439px;font-size:8.6px;line-height:9px;color:#595959;white-space:nowrap;transform-origin:100% 0;transform:translateX(-100%) rotate(-45deg) scaleX(0.95);">апр.19</div>
<div style="position:absolute;left:146.1px;top:439px;font-size:8.6px;line-height:9px;color:#595959;white-space:nowrap;transform-origin:100% 0;transform:translateX(-100%) rotate(-45deg) scaleX(0.95);">май.19</div>
<div style="position:absolute;left:170.6px;top:439px;font-size:8.6px;line-height:9px;color:#595959;white-space:nowrap;transform-origin:100% 0;transform:translateX(-100%) rotate(-45deg) scaleX(0.95);">июнь.19</div>
<div style="position:absolute;left:195.1px;top:439px;font-size:8.6px;line-height:9px;color:#595959;white-space:nowrap;transform-origin:100% 0;transform:translateX(-100%) rotate(-45deg) scaleX(0.95);">июль.19</div>
<div style="position:absolute;left:219.5px;top:439px;font-size:8.6px;line-height:9px;color:#595959;white-space:nowrap;transform-origin:100% 0;transform:translateX(-100%) rotate(-45deg) scaleX(0.95);">авг.19</div>
<div style="position:absolute;left:244.0px;top:439px;font-size:8.6px;line-height:9px;color:#595959;white-space:nowrap;transform-origin:100% 0;transform:translateX(-100%) rotate(-45deg) scaleX(0.95);">сент.19</div>
<div style="position:absolute;left:268.5px;top:439px;font-size:8.6px;line-height:9px;color:#595959;white-space:nowrap;transform-origin:100% 0;transform:translateX(-100%) rotate(-45deg) scaleX(0.95);">окт.19</div>
<div style="position:absolute;left:292.9px;top:439px;font-size:8.6px;line-height:9px;color:#595959;white-space:nowrap;transform-origin:100% 0;transform:translateX(-100%) rotate(-45deg) scaleX(0.95);">нояб.19</div>
<div style="position:absolute;left:317.4px;top:439px;font-size:8.6px;line-height:9px;color:#595959;white-space:nowrap;transform-origin:100% 0;transform:translateX(-100%) rotate(-45deg) scaleX(0.95);">дек.19</div>
<div style="position:absolute;left:341.9px;top:439px;font-size:8.6px;line-height:9px;color:#595959;white-space:nowrap;transform-origin:100% 0;transform:translateX(-100%) rotate(-45deg) scaleX(0.95);">янв.20</div>
<div style="position:absolute;left:366.3px;top:439px;font-size:8.6px;line-height:9px;color:#595959;white-space:nowrap;transform-origin:100% 0;transform:translateX(-100%) rotate(-45deg) scaleX(0.95);">февр.20</div>
<div style="position:absolute;left:390.8px;top:439px;font-size:8.6px;line-height:9px;color:#595959;white-space:nowrap;transform-origin:100% 0;transform:translateX(-100%) rotate(-45deg) scaleX(0.95);">март.20</div>
<div style="position:absolute;left:415.3px;top:439px;font-size:8.6px;line-height:9px;color:#595959;white-space:nowrap;transform-origin:100% 0;transform:translateX(-100%) rotate(-45deg) scaleX(0.95);">апр.20</div>
<div style="position:absolute;left:265px;top:478px;font-size:8.6px;line-height:8.6px;color:#595959;font-weight:400;white-space:nowrap;transform:scaleX(0.93);transform-origin:left;">Чистая прибыль,</div>
<div style="position:absolute;left:265px;top:489px;font-size:8.6px;line-height:8.6px;color:#595959;font-weight:400;white-space:nowrap;transform:scaleX(0.93);transform-origin:left;">тыс. руб.</div>
<div style="position:absolute;left:366px;top:478px;font-size:8.6px;line-height:8.6px;color:#595959;font-weight:400;white-space:nowrap;transform:scaleX(0.93);transform-origin:left;">Общая выручка,</div>
<div style="position:absolute;left:367px;top:489px;font-size:8.6px;line-height:8.6px;color:#595959;font-weight:400;white-space:nowrap;transform:scaleX(0.93);transform-origin:left;">тыс. руб.</div>
</div>
<div style="position:absolute;left:460.0px;top:214.0px;width:9px;height:9px;background:#fff;border:1px solid #9b9b9b;border-radius:1px;"></div>
<div style="position:absolute;left:792.0px;top:214.0px;width:9px;height:9px;background:#fff;border:1px solid #9b9b9b;border-radius:1px;"></div>
<div style="position:absolute;left:460.0px;top:467.0px;width:9px;height:9px;background:#fff;border:1px solid #9b9b9b;border-radius:1px;"></div>
<div style="position:absolute;left:460.0px;top:722.0px;width:9px;height:9px;background:#fff;border:1px solid #9b9b9b;border-radius:1px;"></div>
<div style="position:absolute;left:792.0px;top:722.0px;width:9px;height:9px;background:#fff;border:1px solid #9b9b9b;border-radius:1px;"></div>
<div style="position:absolute;left:882px;top:155px;width:301px;height:653px;background:#ececec;border-left:1px solid #c9c9c9;"></div>
<div style="position:absolute;left:896px;top:157px;width:166px;height:24px;background:#ebebeb;border:3px solid #8fb2ec;border-radius:4px;"></div>
<div style="position:absolute;left:902px;top:161px;font-size:15.6px;line-height:15.6px;color:#262626;font-weight:400;white-space:nowrap;-webkit-text-stroke:0.3px #262626;">Формат ряда данных</div>
<svg style="position:absolute;left:1160px;top:161px;" width="16" height="16" viewBox="0 0 16 16"><circle cx="8" cy="8" r="7" fill="#707070"/><path d="M5 5 L11 11 M11 5 L5 11" stroke="#f2f2f2" stroke-width="1.8"/></svg>
<div style="position:absolute;left:988px;top:197px;width:42px;height:37px;background:#f5f5f5;border:1px solid #d8d8d8;border-bottom:none;border-radius:3px 3px 0 0;"></div>
<div style="position:absolute;left:882px;top:233px;width:301px;height:1px;background:#d2d2d2;"></div>
<svg style="position:absolute;left:900px;top:200px;" width="30" height="30" viewBox="0 0 30 30"><path d="M6 18.2 L14.5 26.3 L24 17.2 L15.8 9.1 Z" fill="#f4f4f8" stroke="#3d3d3d" stroke-width="1"/><path d="M12.2 12.4 L20.7 20.4" stroke="#2f80e2" stroke-width="3"/><path d="M16 13.5 V6.5 A2 2 0 0 1 20 6.5 V13.5" fill="none" stroke="#333" stroke-width="1.5"/><path d="M21.5 12.8 Q27.5 13.5 26.8 23.5" fill="none" stroke="#2f80e2" stroke-width="3"/></svg>
<svg style="position:absolute;left:950px;top:200px;" width="26" height="30" viewBox="0 0 26 30"><path d="M12.6 5 L22 12.5 L19 22.6 H7.2 L4.2 12.5 Z" fill="#2f80e2"/><rect x="7.2" y="22.6" width="11.8" height="2.4" fill="#8fb5f0"/><rect x="6.5" y="25" width="13" height="3" fill="#d6d6d6"/></svg>
<svg style="position:absolute;left:997px;top:205px;" width="24" height="21" viewBox="0 0 24 21"><rect x="1.5" y="7" width="6" height="13" rx="1" fill="#2f80e2" stroke="#2f80e2" stroke-width="1"/><rect x="9" y="1" width="6" height="19" rx="1" fill="#fcd35b" stroke="#eeb52e" stroke-width="1"/><rect x="16.5" y="8" width="6" height="12" rx="1" fill="#6c716e" stroke="#6c716e" stroke-width="1"/></svg>
<div style="position:absolute;left:882px;top:239px;width:301px;height:26px;background:#e3e3e3;border-top:1px solid #d6d6d6;border-bottom:1px solid #d6d6d6;"></div>
<svg style="position:absolute;left:891px;top:247px;" width="10" height="9" viewBox="0 0 10 9"><path d="M0.5 0.5 H9 L4.75 8 Z" fill="#676767"/></svg>
<div style="position:absolute;left:905px;top:245px;font-size:13.3px;line-height:13.3px;color:#262626;font-weight:400;white-space:nowrap;">Параметры ряда</div>
<div style="position:absolute;left:902px;top:282px;font-size:12.4px;line-height:12.4px;color:#262626;font-weight:700;white-space:nowrap;">Построить ряд</div>
<div style="position:absolute;left:900px;top:305px;width:15px;height:15px;background:#fff;border:1px solid #b9b9b9;border-radius:50%;"></div>
<div style="position:absolute;left:919px;top:306px;font-size:12.8px;line-height:12.8px;color:#262626;font-weight:400;white-space:nowrap;">По основной оси</div>
<div style="position:absolute;left:900px;top:325px;width:15px;height:15px;background:#3b8ef0;border:1px solid #2f79d6;border-radius:50%;"></div>
<div style="position:absolute;left:905px;top:330px;width:5px;height:5px;background:#fff;border-radius:50%;"></div>
<div style="position:absolute;left:919px;top:326px;font-size:12.8px;line-height:12.8px;color:#262626;font-weight:400;white-space:nowrap;">По вспомогательной оси</div>
<div style="position:absolute;left:889px;top:320px;width:199px;height:26px;border:3px solid #ea1212;border-radius:10px;"></div>
<div style="position:absolute;left:1183px;top:155px;width:1px;height:653px;background:#c6c6c6;"></div>
<div style="position:absolute;left:5px;top:782px;width:877px;height:26px;background:#e9e9e9;border-top:1px solid #c9cccb;"></div>
<svg style="position:absolute;left:19px;top:790px;" width="34" height="12" viewBox="0 0 34 12"><path d="M7 0.5 V11 L1 5.75 Z" fill="#b9bcbb"/><path d="M24 0.5 V11 L30 5.75 Z" fill="#b9bcbb"/></svg>
<div style="position:absolute;left:65px;top:782px;width:116px;height:23px;background:#fff;border-bottom:1px solid #b9b9b9;border-left:1px solid #d0d0d0;border-right:1px solid #d0d0d0;border-radius:0 0 2px 2px;"></div>
<div style="position:absolute;left:123px;top:787px;font-size:12.5px;line-height:12.5px;color:#237a48;font-weight:700;white-space:nowrap;transform:translateX(-50%) scaleX(0.98);">microexcel.ru</div>
<svg style="position:absolute;left:192px;top:788px;" width="14" height="14" viewBox="0 0 14 14"><path d="M7 2 V12 M2 7 H12" stroke="#555" stroke-width="1.8"/></svg>
<div style="position:absolute;left:217px;top:786px;width:1px;height:18px;background:#d0d0d0;"></div>
<div style="position:absolute;left:5px;top:808px;width:1178px;height:23px;background:#e6e6e5;border-top:1px solid #bfc1c0;border-radius:0 0 5px 5px;"></div>
<div style="position:absolute;left:29px;top:814px;font-size:12.3px;line-height:12.3px;color:#505352;font-weight:400;white-space:nowrap;">Готово</div>
<div style="position:absolute;left:479px;top:814px;font-size:12.2px;line-height:12.2px;color:#505352;font-weight:400;white-space:nowrap;transform:scaleX(1.03);transform-origin:left;">Среднее: 17879,28472</div>
<div style="position:absolute;left:632px;top:814px;font-size:12.2px;line-height:12.2px;color:#505352;font-weight:400;white-space:nowrap;transform:scaleX(1.06);transform-origin:left;">Количество: 75</div>
<div style="position:absolute;left:743px;top:814px;font-size:12.2px;line-height:12.2px;color:#505352;font-weight:400;white-space:nowrap;transform:scaleX(1.05);transform-origin:left;">Сумма: 1287308,5</div>
<div style="position:absolute;left:861px;top:809px;width:37px;height:22px;background:#a8abab;"></div>
<svg style="position:absolute;left:870px;top:811px;" width="18" height="18" viewBox="0 0 18 18"><rect x="2.5" y="3.5" width="13" height="12" fill="none" stroke="#fff" stroke-width="1.2"/><path d="M6.8 3.5 V15.5 M11.2 3.5 V15.5 M2.5 7.5 H15.5 M2.5 11.5 H15.5" stroke="#fff" stroke-width="1.2"/></svg>
<svg style="position:absolute;left:906px;top:811px;" width="18" height="18" viewBox="0 0 18 18"><rect x="2.5" y="3.5" width="13" height="12" fill="none" stroke="#555" stroke-width="1.2"/><rect x="5" y="6" width="8" height="7" fill="none" stroke="#555" stroke-width="1"/><path d="M6.5 8 H11.5 M6.5 10 H11.5" stroke="#555" stroke-width="0.8"/></svg>
<svg style="position:absolute;left:942px;top:811px;" width="18" height="18" viewBox="0 0 18 18"><rect x="2.5" y="3.5" width="13" height="12" fill="none" stroke="#555" stroke-width="1.2"/><path d="M6.5 3.5 V9.5 H11.5 V3.5 M2.5 9.5 H6.5" fill="none" stroke="#555" stroke-width="1.2"/></svg>
<div style="position:absolute;left:976px;top:819px;width:8px;height:2px;background:#555;"></div>
<div style="position:absolute;left:993px;top:818px;width:97px;height:4px;background:#a6a9a8;border-radius:2px;"></div>
<div style="position:absolute;left:1035px;top:813px;width:14px;height:14px;background:#fff;border:1px solid #b5b5b5;border-radius:50%;"></div>
<svg style="position:absolute;left:1097px;top:814px;" width="12" height="12" viewBox="0 0 12 12"><path d="M6 1.5 V10.5 M1.5 6 H10.5" stroke="#444" stroke-width="2"/></svg>
<div style="position:absolute;left:1124px;top:814px;font-size:12.2px;line-height:12.2px;color:#505352;font-weight:400;white-space:nowrap;">100 %</div>
</div></body></html>
